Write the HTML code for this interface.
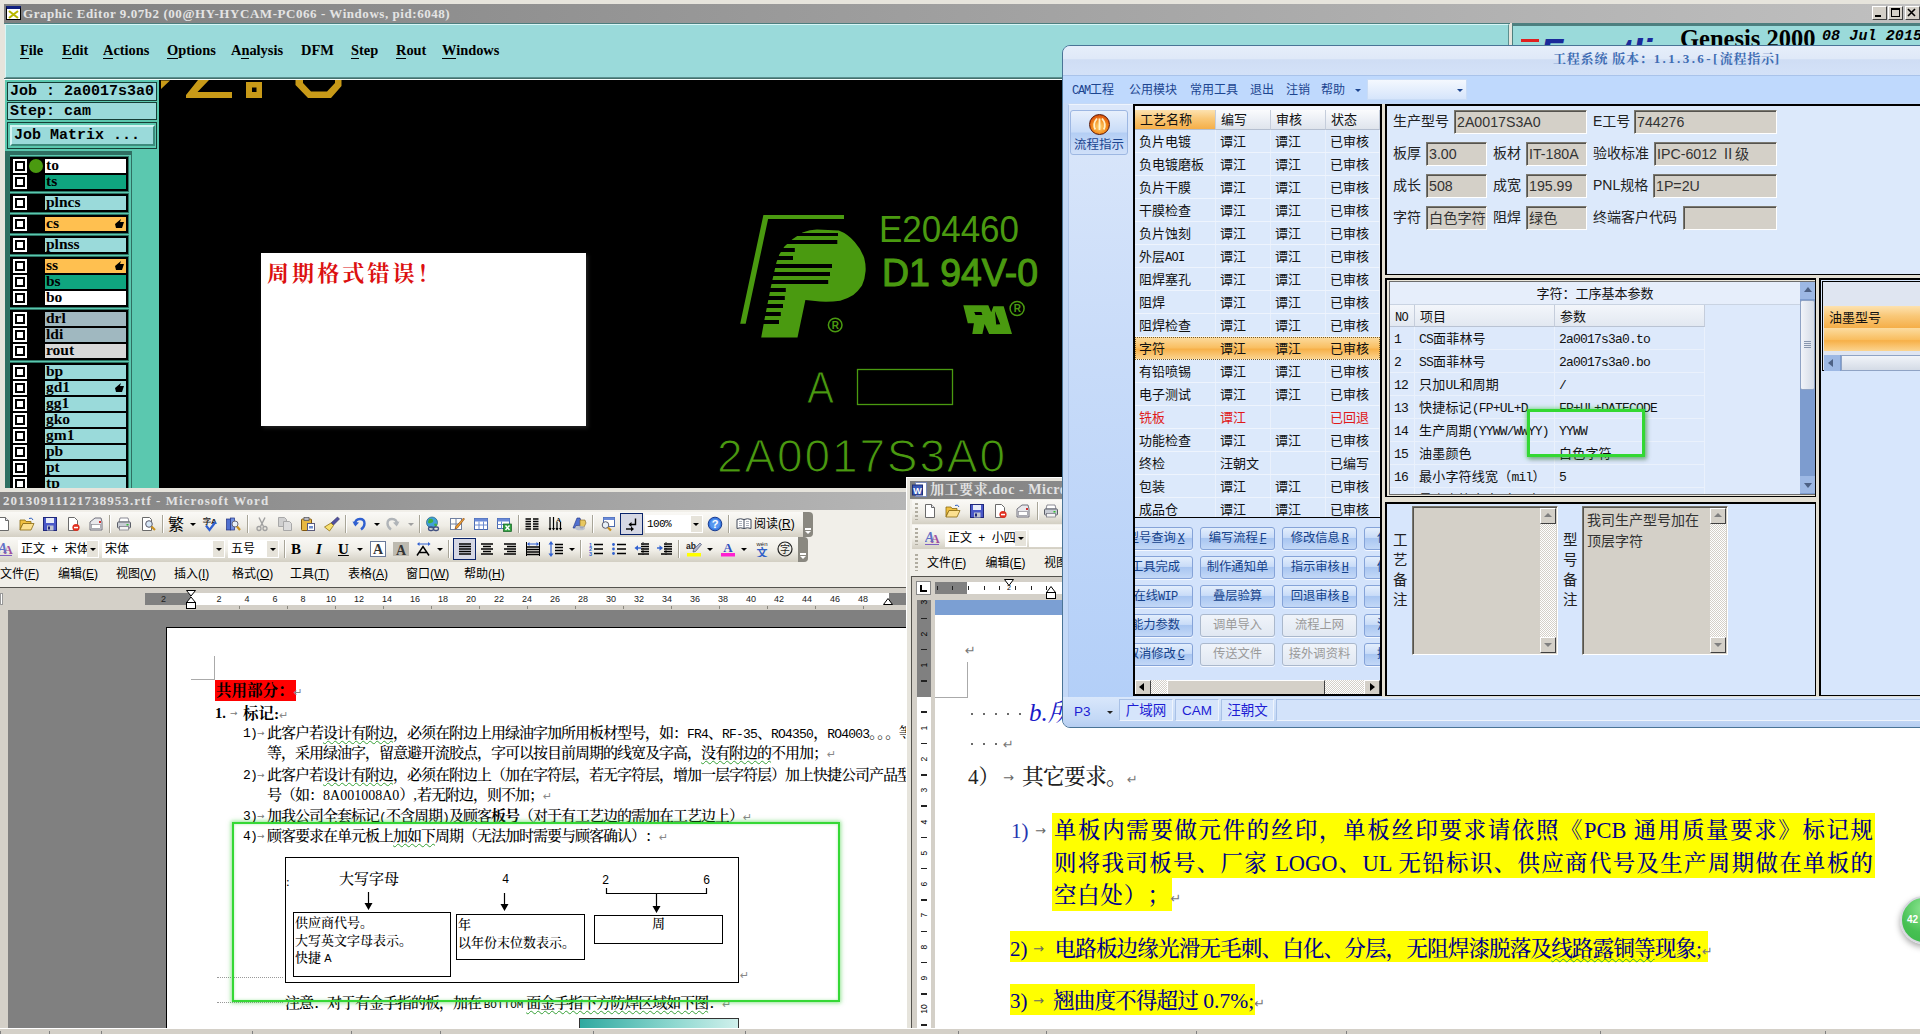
<!DOCTYPE html><html><head><meta charset="utf-8"><title>screen</title><style>
*{box-sizing:border-box;margin:0;padding:0}
html,body{width:1920px;height:1034px;overflow:hidden;background:#fff}
body{position:relative;text-spacing-trim:space-all;font-family:"Liberation Sans","Noto Sans CJK SC",sans-serif;font-size:12px;color:#000}
.a{position:absolute}
.mono{font-family:"Liberation Mono",monospace;font-weight:bold}
.serif{font-family:"Liberation Serif","Noto Serif CJK SC",serif}
.song{font-family:"Liberation Serif","Noto Serif CJK SC",serif;font-weight:500}
.hei{font-family:"Liberation Sans","Noto Sans CJK SC",sans-serif}
.nw{white-space:nowrap}
.wv{text-decoration:underline wavy #35a035 1px;text-underline-offset:2px;text-decoration-skip-ink:none}
/* genesis */
#gen{left:0;top:0;width:1920px;height:492px;background:#e6e4dc;overflow:hidden}
.gtitle{left:4px;top:4px;width:1916px;height:19px;background:linear-gradient(90deg,#808080,#c0c0c0);color:#e4e4e4;font:bold 13px/19px "Liberation Serif","Noto Serif CJK SC",serif;letter-spacing:.55px;white-space:nowrap}
.gmenu{background:#9adada;border:1px solid #5b8f8f;border-top-color:#d8f6f6;border-left-color:#d8f6f6}
.gmenu span{position:absolute;top:16px;font:bold 14.4px/18px "Liberation Serif",serif;white-space:nowrap}
.gmenu span u{text-decoration:none;border-bottom:1.5px solid #000;padding-bottom:0px}
.lp{background:#5bc8af}
.jbox{left:7px;width:150px;background:#9adada;border:1px solid #163e36;font:bold 15px/17px "Liberation Mono",monospace;white-space:nowrap;padding-left:2px;overflow:hidden}
.grp{left:10px;width:118px;background:#000;border:1px solid #000;outline:1px solid #2c7565}
.cb{left:2px;width:14px;height:14px;background:#fff;border:0}
.cb i{position:absolute;left:2px;top:2px;width:10px;height:10px;border:2px solid #000;background:#fff}
.lb{left:34px;width:81px;height:14px;font:bold 15.5px/12px "Liberation Serif",serif;padding-left:1px;white-space:nowrap;overflow:hidden}
</style></head><body>
<div id="gen" class="a">
<div class="a gtitle"><span class="a" style="left:2px;top:2px;width:15px;height:14px;background:#fff;border:1px solid #000;border-top:3px solid #102080"></span><svg class="a" style="left:4px;top:6px" width="11" height="9" viewBox="0 0 11 9"><path d="M1 1L10 8M10 1L1 8" stroke="#b8b800" stroke-width="2.2" fill="none"/></svg><span class="a" style="left:19px;top:0">Graphic Editor 9.07b2 (00@HY-HYCAM-PC066 - Windows, pid:6048)</span>
<span class="a" style="left:1868px;top:2px;width:15px;height:14px;background:#d4d0c8;border:1px solid #fff;border-right-color:#404040;border-bottom-color:#404040"></span>
<span class="a" style="left:1884px;top:2px;width:15px;height:14px;background:#d4d0c8;border:1px solid #fff;border-right-color:#404040;border-bottom-color:#404040"></span>
<span class="a" style="left:1901px;top:2px;width:15px;height:14px;background:#d4d0c8;border:1px solid #fff;border-right-color:#404040;border-bottom-color:#404040"></span>
<svg class="a" style="left:1868px;top:2px" width="48" height="14" viewBox="0 0 48 14"><path d="M3 10h6" stroke="#000" stroke-width="2"/><rect x="19.5" y="2.5" width="8" height="8" fill="none" stroke="#000" stroke-width="1"/><path d="M19 3h9" stroke="#000" stroke-width="2"/><path d="M36 3l7 7M43 3l-7 7" stroke="#000" stroke-width="1.6"/></svg>
</div>
<div class="a" style="left:4px;top:23px;width:1506px;height:1px;background:#4d7f7f"></div><div class="a gmenu" style="left:5px;top:24px;width:1504px;height:54px">
<span style="left:14px"><u>F</u>ile</span>
<span style="left:56px"><u>E</u>dit</span>
<span style="left:97px"><u>A</u>ctions</span>
<span style="left:161px"><u>O</u>ptions</span>
<span style="left:225px">A<u>n</u>alysis</span>
<span style="left:295px">DFM</span>
<span style="left:345px"><u>S</u>tep</span>
<span style="left:390px"><u>R</u>out</span>
<span style="left:436px"><u>W</u>indows</span>
</div>
<div class="a gmenu" style="left:1512px;top:23px;width:412px;height:55px;overflow:hidden;border-top:3px solid #4d7f7f;border-left:1px solid #4d7f7f"><span style="left:167px;top:-1px;font:bold 24.500px/28px 'Liberation Serif',serif">Genesis 2000</span><span style="left:309px;top:2px;font:italic bold 15px/18px 'Liberation Mono',monospace;letter-spacing:0.1px">08 Jul 2015</span><span style="left:8px;top:13px;width:18px;height:3px;background:#e02020"></span><span style="left:27px;top:8px;font:italic bold 38px/38px 'Liberation Sans',sans-serif;color:#1a2a9a;letter-spacing:-1px">Frontline</span></div>
<div class="a" style="left:4px;top:78px;width:1916px;height:1px;background:#44706c"></div>
<div class="a" style="left:4px;top:79px;width:1916px;height:1px;background:#f4fcfc"></div>
<div class="a" style="left:159px;top:80px;width:1761px;height:408px;background:#000"></div>
<div class="a lp" style="left:5px;top:80px;width:154px;height:408px"></div>
<div class="a jbox" style="top:82px;height:19px">Job : 2a0017s3a0</div>
<div class="a jbox" style="top:102px;height:18px">Step: cam</div>
<div class="a" style="left:7px;top:122px;width:150px;height:27px;border:1px solid #163e36;background:#5bc8af"></div>
<div class="a mono nw" style="left:10px;top:125px;width:145px;height:21px;background:#9adada;border:2px solid;border-color:#d4f4f4 #3d8a7c #3d8a7c #d4f4f4;font-size:15px;line-height:17px;padding-left:2px">Job Matrix ...</div>
<div class="a" style="left:5px;top:151px;width:127px;height:337px;background:#2f6f62"></div>
<div class="a" style="left:10px;top:155px;width:121px;height:333px;background:#5bc8af"></div>
<div class="a grp" style="top:157px;height:34px">
<span class="a cb" style="top:1px"><i></i></span>
<span class="a" style="left:18px;top:1px;width:14px;height:14px;border-radius:50%;background:#4a9a10"></span>
<span class="a lb" style="top:1px;background:#fff">to</span>
<span class="a cb" style="top:17px"><i></i></span>
<span class="a lb" style="top:17px;background:#0fa57f">ts</span>
</div>
<div class="a grp" style="top:194px;height:18px">
<span class="a cb" style="top:1px"><i></i></span>
<span class="a lb" style="top:1px;background:#9adada">plncs</span>
</div>
<div class="a grp" style="top:215px;height:18px">
<span class="a cb" style="top:1px"><i></i></span>
<span class="a lb" style="top:1px;background:#ffc050">cs<svg class="a" style="right:2px;top:2px" width="9" height="10" viewBox="0 0 9 10"><path d="M0 5L6 0L5 3L9 3L7 9L1 9Z" fill="#000"/></svg></span>
</div>
<div class="a grp" style="top:236px;height:18px">
<span class="a cb" style="top:1px"><i></i></span>
<span class="a lb" style="top:1px;background:#9adada">plnss</span>
</div>
<div class="a grp" style="top:257px;height:50px">
<span class="a cb" style="top:1px"><i></i></span>
<span class="a lb" style="top:1px;background:#ffc050">ss<svg class="a" style="right:2px;top:2px" width="9" height="10" viewBox="0 0 9 10"><path d="M0 5L6 0L5 3L9 3L7 9L1 9Z" fill="#000"/></svg></span>
<span class="a cb" style="top:17px"><i></i></span>
<span class="a lb" style="top:17px;background:#0fa57f">bs</span>
<span class="a cb" style="top:33px"><i></i></span>
<span class="a lb" style="top:33px;background:#fff">bo</span>
</div>
<div class="a grp" style="top:310px;height:50px">
<span class="a cb" style="top:1px"><i></i></span>
<span class="a lb" style="top:1px;background:#a0b8c0">drl</span>
<span class="a cb" style="top:17px"><i></i></span>
<span class="a lb" style="top:17px;background:#a0b8c0">ldi</span>
<span class="a cb" style="top:33px"><i></i></span>
<span class="a lb" style="top:33px;background:#d8d8d8">rout</span>
</div>
<div class="a grp" style="top:363px;height:130px">
<span class="a cb" style="top:1px"><i></i></span>
<span class="a lb" style="top:1px;background:#9adada">bp</span>
<span class="a cb" style="top:17px"><i></i></span>
<span class="a lb" style="top:17px;background:#9adada">gd1<svg class="a" style="right:2px;top:2px" width="9" height="10" viewBox="0 0 9 10"><path d="M0 5L6 0L5 3L9 3L7 9L1 9Z" fill="#000"/></svg></span>
<span class="a cb" style="top:33px"><i></i></span>
<span class="a lb" style="top:33px;background:#9adada">gg1</span>
<span class="a cb" style="top:49px"><i></i></span>
<span class="a lb" style="top:49px;background:#9adada">gko</span>
<span class="a cb" style="top:65px"><i></i></span>
<span class="a lb" style="top:65px;background:#9adada">gm1</span>
<span class="a cb" style="top:81px"><i></i></span>
<span class="a lb" style="top:81px;background:#9adada">pb</span>
<span class="a cb" style="top:97px"><i></i></span>
<span class="a lb" style="top:97px;background:#9adada">pt</span>
<span class="a cb" style="top:113px"><i></i></span>
<span class="a lb" style="top:113px;background:#9adada">tp</span>
</div>
</div>
<svg class="a" style="left:159px;top:80px" width="903" height="408" viewBox="159 80 903 408"><g fill="#c89a18"><path d="M161 80.5H170L161 89Z"/><path d="M198 80H209L197.500 92H232V98H186V95Z"/><path d="M246 82H262V98H246Z M252 87.500V92H256.500V87.500Z" fill-rule="evenodd"/><path d="M295.500 80H303V83L311 91.500H327L335 83V80H341.500V86L331 98H308L295.500 85Z"/></g><g fill="#4a9a10"><path d="M763.400 214.900H844V219H768.100L745.700 323.700H740.200Z"/><path d="M802.500 232.600 Q810 229.400 817 229.400 L838.800 230.500 Q848 234 854.700 242 Q861 249 864.200 258 Q866 265 865.600 271 Q865 279 862 285.600 Q858.500 291 853.300 295 Q847 299 840.200 300.800 Q830 302 820 301.500 L805.400 300 L797.500 337.500 H761.200 L764.800 317.800 L771 286.300 L776.400 262.400 L779.300 254.400 L784.400 246.400 L792.400 239.200Z"/></g><rect x="766.5" y="233" width="71.5" height="3" fill="#000"/><rect x="764.8" y="240" width="72.5" height="4" fill="#000"/><rect x="763.1" y="248" width="31.7" height="4" fill="#000"/><rect x="761.4" y="256" width="31.6" height="4" fill="#000"/><rect x="759.7" y="264" width="72.3" height="4" fill="#000"/><rect x="758.0" y="272" width="72.0" height="4" fill="#000"/><rect x="756.3" y="280" width="71.9" height="4" fill="#000"/><rect x="754.6" y="288" width="31.2" height="4" fill="#000"/><rect x="752.9" y="296" width="31.9" height="4" fill="#000"/><rect x="751.2" y="304" width="31.8" height="4" fill="#000"/><rect x="749.4" y="312" width="31.4" height="4" fill="#000"/><rect x="747.7" y="320" width="31.3" height="4" fill="#000"/><circle cx="835.200" cy="325" r="6.800" fill="none" stroke="#4a9a10" stroke-width="1.500"/><text x="835.400" y="328.600" font-family="Liberation Sans,sans-serif" font-size="10" font-weight="bold" fill="#4a9a10" text-anchor="middle">R</text><text x="879" y="242" font-family="Liberation Sans,sans-serif" font-size="36" fill="#4a9a10" textLength="140" lengthAdjust="spacingAndGlyphs">E204460</text><text x="882" y="286" font-family="Liberation Sans,sans-serif" font-size="38" stroke="#4a9a10" stroke-width="1.100" fill="#4a9a10" textLength="156" lengthAdjust="spacingAndGlyphs" xml:space="preserve">D1 94V-0</text><path fill="#4a9a10" fill-rule="evenodd" d="M963.300 305.200L988.300 305.200L991.200 312.300L993.400 306.200L1003.700 306.200L1012 333.900L989.100 333.900L984.600 324L982.400 333.900L972.300 333.900L973.900 323.200L967.800 323.200Z M974.200 312.100L981.400 312.100L982.400 315L975.500 315Z M994.900 311L1000.300 324.300L996.200 324.600Z"/><circle cx="1017.100" cy="308.500" r="7" fill="none" stroke="#4a9a10" stroke-width="1.500"/><text x="1017.300" y="312.200" font-family="Liberation Sans,sans-serif" font-size="10" font-weight="bold" fill="#4a9a10" text-anchor="middle">R</text><text x="807" y="403" font-family="Liberation Sans,sans-serif" font-size="45" fill="#4a9a10" stroke="#000" stroke-width="1.100" textLength="27" lengthAdjust="spacingAndGlyphs">A</text><rect x="857.500" y="369.500" width="95" height="35" fill="none" stroke="#4a9a10" stroke-width="1.300"/><text x="717" y="472" font-family="Liberation Sans,sans-serif" font-size="46" fill="#4a9a10" stroke="#000" stroke-width="1.200" textLength="288" lengthAdjust="spacing">2A0017S3A0</text></svg>
<div class="a" style="left:261px;top:253px;width:325px;height:173px;background:#fff;box-shadow:2px 2px 4px #222"></div>
<div class="a song nw" style="left:267px;top:261px;font-weight:bold;font-size:22px;line-height:26px;letter-spacing:3.1px;color:#dc1010">周期格式错误！</div>
<div class="a" id="w1" style="left:0;top:0;width:907px;height:1034px;overflow:hidden">
<div class="a" style="left:0;top:488px;width:907px;height:546px;background:#e6e4dc"></div>
<div class="a" style="left:0;top:492px;width:907px;height:18px;background:linear-gradient(90deg,#808080,#b6b6b6)"></div>
<div class="a nw" style="left:3px;top:492px;height:18px;color:#e2e2e2;font:bold 13px/18px 'Liberation Serif','Noto Serif CJK SC',serif;letter-spacing:1.050px" id="w1t">20130911121738953.rtf - Microsoft Word</div>
<div class="a" style="left:0;top:510px;width:907px;height:77px;background:#f1efe9"></div>
<div class="a" style="left:0;top:512px;width:813px;height:25px;background:linear-gradient(#faf9f6,#efede6 55%,#d3cfc3);border-radius:0 4px 4px 0"></div>
<div class="a" style="left:803px;top:512px;width:10px;height:25px;background:#8a8880;border-radius:0 4px 4px 0"></div>
<div class="a" style="left:0;top:537px;width:808px;height:25px;background:linear-gradient(#faf9f6,#efede6 55%,#d3cfc3);border-radius:0 4px 4px 0"></div>
<div class="a" style="left:798px;top:537px;width:10px;height:25px;background:#8a8880;border-radius:0 4px 4px 0"></div>
<span class="a" style="left:805px;top:528px;width:6px;height:1.500px;background:#fff"></span><span class="a" style="left:805px;top:531px;width:0;height:0;border:3px solid transparent;border-top:3px solid #fff;border-bottom:0"></span>
<span class="a" style="left:800px;top:553px;width:6px;height:1.500px;background:#fff"></span><span class="a" style="left:800px;top:556px;width:0;height:0;border:3px solid transparent;border-top:3px solid #fff;border-bottom:0"></span>
<svg class="a" style="left:-4px;top:516px" width="16" height="16" viewBox="0 0 16 16"><path d="M3.500 1.500h6l3 3v10h-9z" fill="#fff" stroke="#6a6a6a"/><path d="M9.500 1.500v3h3" fill="#e8e8f0" stroke="#6a6a6a"/></svg>
<svg class="a" style="left:19px;top:516px" width="16" height="16" viewBox="0 0 16 16"><path d="M1 4h5l1 1.500h5v2H4l-3 6z" fill="#f0c040" stroke="#8a6a10" stroke-width=".8"/><path d="M4 7.500h11l-3 6.500H1z" fill="#fbe090" stroke="#8a6a10" stroke-width=".8"/><path d="M10 2.500q3-1.500 4 1.500" fill="none" stroke="#3060c0"/></svg>
<svg class="a" style="left:42px;top:516px" width="16" height="16" viewBox="0 0 16 16"><rect x="1.500" y="1.500" width="13" height="13" fill="#4a58c8" stroke="#20287a"/><rect x="4" y="2" width="8" height="5" fill="#e8ecf8"/><rect x="5" y="9.500" width="6.500" height="5" fill="#c0c4d0"/><rect x="6" y="10.500" width="2" height="3" fill="#20287a"/></svg>
<svg class="a" style="left:65px;top:516px" width="16" height="16" viewBox="0 0 16 16"><path d="M3.500 1.500h6l3 3v10h-9z" fill="#fff" stroke="#6a6a6a"/><circle cx="11" cy="11.500" r="3.600" fill="#e03020"/><rect x="9" y="10.800" width="4" height="1.500" fill="#fff"/></svg>
<svg class="a" style="left:88px;top:516px" width="16" height="16" viewBox="0 0 16 16"><path d="M2 6l5-4h6l1 4v8H2z" fill="#e8e8ec" stroke="#70707c"/><rect x="3.500" y="8.500" width="9" height="4" fill="#fff" stroke="#8a8a94" stroke-width=".7"/><rect x="11" y="5" width="2" height="2" fill="#d03030"/></svg>
<span class="a" style="left:109px;top:515px;width:2px;height:18px;border-left:1px solid #a8a598;border-right:1px solid #fff"></span>
<svg class="a" style="left:116px;top:516px" width="16" height="16" viewBox="0 0 16 16"><path d="M4 2h8l1 4H3z" fill="#fff" stroke="#70707c" stroke-width=".8"/><rect x="1.500" y="6" width="13" height="6" rx="1" fill="#c8ccd4" stroke="#5a5e68"/><rect x="3.500" y="10.500" width="9" height="3.500" fill="#f4f4f4" stroke="#70707c" stroke-width=".7"/><rect x="10.500" y="8" width="2" height="1.500" fill="#30c030"/></svg>
<svg class="a" style="left:140px;top:516px" width="16" height="16" viewBox="0 0 16 16"><path d="M2.500 1.500h7l2 2v11h-9z" fill="#fff" stroke="#6a6a6a"/><circle cx="9" cy="8" r="3.300" fill="#d8e8f8" stroke="#5a5a6a"/><path d="M11.500 10.500l3.500 3.500" stroke="#c89020" stroke-width="2.200"/></svg>
<span class="a" style="left:162px;top:515px;width:2px;height:18px;border-left:1px solid #a8a598;border-right:1px solid #fff"></span>
<span class="a hei nw" style="left:168px;top:515px;font-size:16px;line-height:20px">繁</span><span class="a" style="left:190px;top:523px;width:0;height:0;border:3px solid transparent;border-top:3px solid #000;border-bottom:0"></span>
<svg class="a" style="left:202px;top:516px" width="16" height="16" viewBox="0 0 16 16"><text x="1" y="8" font-size="8" font-weight="bold" font-family="Liberation Sans,sans-serif" fill="#222">字A</text><path d="M4 9.500l3.500 4.500l6-8" fill="none" stroke="#3060d0" stroke-width="2.200"/></svg>
<svg class="a" style="left:225px;top:516px" width="16" height="16" viewBox="0 0 16 16"><rect x="1.500" y="3" width="4" height="11" fill="#5070d0" stroke="#203080" stroke-width=".7"/><rect x="5.500" y="2" width="4" height="12" fill="#7090e0" stroke="#203080" stroke-width=".7"/><circle cx="10" cy="8" r="3" fill="#e8f0f8" stroke="#6a6a7a"/><path d="M12 10.500l3 3.500" stroke="#c89020" stroke-width="2.200"/></svg>
<span class="a" style="left:247px;top:515px;width:2px;height:18px;border-left:1px solid #a8a598;border-right:1px solid #fff"></span>
<svg class="a" style="left:254px;top:516px" width="16" height="16" viewBox="0 0 16 16"><path d="M5 1.500l4.500 9M11 1.500l-4.500 9" stroke="#a0a0a0" stroke-width="1.400" fill="none"/><circle cx="5" cy="12.500" r="2" fill="none" stroke="#a0a0a0" stroke-width="1.300"/><circle cx="11" cy="12.500" r="2" fill="none" stroke="#a0a0a0" stroke-width="1.300"/></svg>
<svg class="a" style="left:277px;top:516px" width="16" height="16" viewBox="0 0 16 16"><path d="M1.500 1.500h6l2 2v7h-8z" fill="#d0d0d0" stroke="#a8a8a8"/><path d="M6.500 5.500h6l2 2v7h-8z" fill="#dcdcdc" stroke="#a8a8a8"/></svg>
<svg class="a" style="left:300px;top:516px" width="16" height="16" viewBox="0 0 16 16"><rect x="1.500" y="3" width="10" height="11.500" rx="1" fill="#e8b840" stroke="#805810"/><rect x="4" y="1.500" width="5" height="3" fill="#b8b8c0" stroke="#505058" stroke-width=".7"/><rect x="7.500" y="7.500" width="7" height="7" fill="#fff" stroke="#5a5a7a"/><rect x="9" y="10" width="4" height="2.500" fill="#7090d0"/></svg>
<svg class="a" style="left:324px;top:516px" width="16" height="16" viewBox="0 0 16 16"><path d="M13.500 1l2 2l-6 6l-2.500-2z" fill="#5050a0" stroke="#303060" stroke-width=".6"/><path d="M7 7l2.500 2.500l-4 5.500l-5-4z" fill="#f8e070" stroke="#907010" stroke-width=".8"/></svg>
<span class="a" style="left:345px;top:515px;width:2px;height:18px;border-left:1px solid #a8a598;border-right:1px solid #fff"></span>
<svg class="a" style="left:352px;top:516px" width="16" height="16" viewBox="0 0 16 16"><path d="M3 8.500q0-5.500 5-5.500q4.500 0 4.500 4.500q0 3.500-3.500 6" fill="none" stroke="#3060d0" stroke-width="2.400"/><path d="M0.500 5.500l2.800 5l3.700-4z" fill="#3060d0"/></svg>
<span class="a" style="left:374px;top:523px;width:0;height:0;border:3px solid transparent;border-top:3px solid #000;border-bottom:0"></span>
<svg class="a" style="left:384px;top:516px" width="16" height="16" viewBox="0 0 16 16"><path d="M13 8.500q0-5.500-5-5.500q-4.500 0-4.500 4.500q0 3.500 3.500 6" fill="none" stroke="#b0b4b8" stroke-width="2.400"/><path d="M15.500 5.500l-2.800 5l-3.700-4z" fill="#b0b4b8"/></svg>
<span class="a" style="left:408px;top:523px;width:0;height:0;border:3px solid transparent;border-top:3px solid #a0a0a0;border-bottom:0"></span>
<span class="a" style="left:419px;top:515px;width:2px;height:18px;border-left:1px solid #a8a598;border-right:1px solid #fff"></span>
<svg class="a" style="left:425px;top:516px" width="16" height="16" viewBox="0 0 16 16"><circle cx="7" cy="6.500" r="5.500" fill="#40a0d8" stroke="#206080" stroke-width=".7"/><path d="M4 3q3-1 4 1t-2 3t-3-1zM9 8q2-1 3 .500t-2 2z" fill="#40b040"/><rect x="3.500" y="11" width="5" height="3.500" rx="1.700" fill="none" stroke="#405080" stroke-width="1.400"/><rect x="8.500" y="11" width="5" height="3.500" rx="1.700" fill="none" stroke="#405080" stroke-width="1.400"/></svg>
<svg class="a" style="left:449px;top:516px" width="16" height="16" viewBox="0 0 16 16"><rect x="1.500" y="2.500" width="11" height="11" fill="#fff" stroke="#7080a0"/><path d="M1.500 8h11M7 2.500v11" stroke="#7080a0"/><path d="M14.500 2l1 1l-7 9l-2.500 1l.8-2.500z" fill="#f0a030" stroke="#804010" stroke-width=".6"/></svg>
<svg class="a" style="left:473px;top:516px" width="16" height="16" viewBox="0 0 16 16"><rect x="1.500" y="2.500" width="13" height="11" fill="#fff" stroke="#4a6ab0"/><rect x="1.500" y="2.500" width="13" height="3" fill="#6a8ad8"/><path d="M1.500 9h13M6 5.500v8M10.500 5.500v8" stroke="#6a8ad0"/></svg>
<svg class="a" style="left:496px;top:516px" width="16" height="16" viewBox="0 0 16 16"><rect x="1.500" y="2.500" width="12" height="10" fill="#fff" stroke="#4a6ab0"/><rect x="1.500" y="2.500" width="12" height="3" fill="#6a8ad8"/><path d="M1.500 8.500h12M5.500 5.500v7" stroke="#6a8ad0"/><rect x="7.500" y="8" width="8" height="7.500" fill="#30a040" stroke="#106020" stroke-width=".7"/><path d="M9.500 9.500l4 4.500M13.500 9.500l-4 4.500" stroke="#fff" stroke-width="1.400"/></svg>
<span class="a" style="left:518px;top:515px;width:2px;height:18px;border-left:1px solid #a8a598;border-right:1px solid #fff"></span>
<svg class="a" style="left:524px;top:516px" width="16" height="16" viewBox="0 0 16 16"><path d="M1.500 3h5.500M1.500 5.500h5.500M1.500 8h5.500M1.500 10.500h5.500M1.500 13h5.500M9 3h5.500M9 5.500h5.500M9 8h5.500M9 10.500h5.500M9 13h5.500" stroke="#000" stroke-width="1.300"/></svg>
<svg class="a" style="left:548px;top:516px" width="16" height="16" viewBox="0 0 16 16"><path d="M2 1v13M5.500 1v13M9 6v8M12.500 6v8" stroke="#000" stroke-width="1.200"/><path d="M.500 12l1.500 2.500l1.500-2.500zM4 12l1.500 2.500l1.500-2.500zM7.500 12l1.500 2.500l1.500-2.500zM11 12l1.500 2.500l1.500-2.500z" fill="#000"/><text x="8" y="5.500" font-size="7" font-weight="bold" font-family="Liberation Serif,serif">A</text></svg>
<svg class="a" style="left:571px;top:516px" width="16" height="16" viewBox="0 0 16 16"><path d="M2 12l4-10h3l3 10h-2.500l-.7-2.500H5l-.8 2.500z" fill="#5070d0" stroke="#203080" stroke-width=".6"/><path d="M9 4h5l1 3l-2 4h-4z" fill="#e8c860" stroke="#806020" stroke-width=".6"/><ellipse cx="9" cy="12" rx="5" ry="2.300" fill="#b0b8c8" opacity=".8"/></svg>
<span class="a" style="left:592px;top:515px;width:2px;height:18px;border-left:1px solid #a8a598;border-right:1px solid #fff"></span>
<svg class="a" style="left:600px;top:516px" width="16" height="16" viewBox="0 0 16 16"><rect x="3.500" y="1.500" width="11" height="9" fill="#fff" stroke="#4a6ab0"/><rect x="3.500" y="1.500" width="11" height="2.500" fill="#6a8ad8"/><circle cx="5.500" cy="9" r="3.300" fill="#e8f0f8" stroke="#5a5a6a"/><path d="M8 11.500l3 3" stroke="#c89020" stroke-width="2.200"/></svg>
<span class="a" style="left:620px;top:513px;width:23px;height:22px;border:1px solid #0a246a;background:#d6d8e4"></span><svg class="a" style="left:624px;top:516px" width="16" height="16" viewBox="0 0 16 16"><path d="M11.500 2.500v6h-6" fill="none" stroke="#000" stroke-width="1.400"/><path d="M7.500 6l-3 2.500l3 2.500z" fill="#000"/><path d="M2 13h6" stroke="#000" stroke-width="1.400"/><path d="M7 10.500l3 2.500l-3 2.500z" fill="#000"/></svg>
<span class="a" style="left:645px;top:515px;width:58px;height:18px;background:#fff"></span><span class="a nw" style="left:647px;top:515px;font:11px/18px 'Liberation Mono',monospace;letter-spacing:-.6px">100%</span><span class="a" style="left:691px;top:516px;width:11px;height:16px;background:#e6e3da"></span><span class="a" style="left:693px;top:523px;width:0;height:0;border:3px solid transparent;border-top:3px solid #000;border-bottom:0"></span>
<svg class="a" style="left:707px;top:516px" width="16" height="16" viewBox="0 0 16 16"><circle cx="8" cy="8" r="6.800" fill="#3878e0" stroke="#1a3c90"/><circle cx="8" cy="8" r="5" fill="#5898f0"/><text x="8" y="12" font-size="11" font-weight="bold" font-family="Liberation Sans,sans-serif" fill="#fff" text-anchor="middle">?</text></svg>
<span class="a" style="left:728px;top:515px;width:2px;height:18px;border-left:1px solid #a8a598;border-right:1px solid #fff"></span>
<svg class="a" style="left:736px;top:516px" width="16" height="16" viewBox="0 0 16 16"><path d="M1 3.500q3.500-1.500 7 0q3.500-1.500 7 0v9q-3.500-1.500-7 0q-3.500-1.500-7 0z" fill="#fff" stroke="#404858"/><path d="M8 3.500v9" stroke="#404858"/><path d="M3 5.500h3M3 7.500h3M3 9.500h3M10 5.500h3M10 7.500h3M10 9.500h3" stroke="#8890a0" stroke-width=".7"/></svg>
<span class="a hei nw" style="left:754px;top:515px;font-size:12px;line-height:18px">阅读(<u>R</u>)</span>
<svg class="a" style="left:-2px;top:541px" width="16" height="16" viewBox="0 0 16 16"><text x="0" y="12" font-size="14" font-weight="bold" font-style="italic" font-family="Liberation Serif,serif" fill="#6070c8">A</text><text x="6" y="13" font-size="12" font-weight="bold" font-family="Liberation Serif,serif" fill="#a050a0">A</text><path d="M0 14.500h14" stroke="#8060c0"/></svg>
<span class="a" style="left:18px;top:540px;width:81px;height:18px;background:#fff"></span><span class="a hei nw" style="left:21px;top:540px;font-size:12px;line-height:18px;word-spacing:3px">正文 + 宋体</span><span class="a" style="left:87px;top:541px;width:11px;height:16px;background:#e6e3da"></span><span class="a" style="left:90px;top:548px;width:0;height:0;border:3px solid transparent;border-top:3px solid #000;border-bottom:0"></span>
<span class="a" style="left:102px;top:540px;width:123px;height:18px;background:#fff"></span><span class="a hei nw" style="left:105px;top:540px;font-size:12px;line-height:18px;word-spacing:3px">宋体</span><span class="a" style="left:213px;top:541px;width:11px;height:16px;background:#e6e3da"></span><span class="a" style="left:216px;top:548px;width:0;height:0;border:3px solid transparent;border-top:3px solid #000;border-bottom:0"></span>
<span class="a" style="left:228px;top:540px;width:51px;height:18px;background:#fff"></span><span class="a hei nw" style="left:231px;top:540px;font-size:12px;line-height:18px;word-spacing:3px">五号</span><span class="a" style="left:267px;top:541px;width:11px;height:16px;background:#e6e3da"></span><span class="a" style="left:270px;top:548px;width:0;height:0;border:3px solid transparent;border-top:3px solid #000;border-bottom:0"></span>
<span class="a" style="left:284px;top:540px;width:2px;height:18px;border-left:1px solid #a8a598;border-right:1px solid #fff"></span>
<span class="a serif" style="left:291px;top:539px;font:bold 15px/20px 'Liberation Serif',serif">B</span>
<span class="a serif" style="left:316px;top:539px;font:italic bold 15px/20px 'Liberation Serif',serif">I</span>
<span class="a serif" style="left:338px;top:539px;font:bold 15px/20px 'Liberation Serif',serif;text-decoration:underline">U</span><span class="a" style="left:357px;top:548px;width:0;height:0;border:3px solid transparent;border-top:3px solid #000;border-bottom:0"></span>
<svg class="a" style="left:370px;top:541px" width="16" height="16" viewBox="0 0 16 16"><rect x=".500" y=".500" width="15" height="15" fill="#fff" stroke="#6a7a9a"/><text x="8" y="13" font-size="14" font-weight="bold" font-family="Liberation Serif,serif" fill="#333" text-anchor="middle">A</text></svg>
<svg class="a" style="left:393px;top:541px" width="16" height="16" viewBox="0 0 16 16"><rect x="0" y="1" width="16" height="14" fill="#bdbab0"/><text x="8" y="13.500" font-size="14" font-weight="bold" font-family="Liberation Serif,serif" fill="#333" text-anchor="middle">A</text></svg>
<svg class="a" style="left:416px;top:541px" width="16" height="16" viewBox="0 0 16 16"><path d="M1 14.500l6-9l6 9M3.500 11.500h7.500" fill="none" stroke="#000" stroke-width="1.500"/><path d="M2 3h11" stroke="#3060d0"/><path d="M1 3l2.500-2v4zM14.500 3l-2.500-2v4z" fill="#3060d0"/></svg>
<span class="a" style="left:437px;top:548px;width:0;height:0;border:3px solid transparent;border-top:3px solid #000;border-bottom:0"></span>
<span class="a" style="left:448px;top:540px;width:2px;height:18px;border-left:1px solid #a8a598;border-right:1px solid #fff"></span>
<span class="a" style="left:453px;top:538px;width:23px;height:22px;border:1px solid #0a246a;background:#d6d8e4"></span>
<svg class="a" style="left:457px;top:541px" width="16" height="16" viewBox="0 0 16 16"><path d="M2 3h12M2 5.500h12M2 8h12M2 10.500h12M2 13h12" stroke="#000" stroke-width="1.300"/></svg>
<svg class="a" style="left:479px;top:541px" width="16" height="16" viewBox="0 0 16 16"><path d="M2 3h12M4 5.500h8M2 8h12M4 10.500h8M2 13h12" stroke="#000" stroke-width="1.300"/></svg>
<svg class="a" style="left:502px;top:541px" width="16" height="16" viewBox="0 0 16 16"><path d="M2 3h12M5 5.500h9M2 8h12M5 10.500h9M2 13h12" stroke="#000" stroke-width="1.300"/></svg>
<svg class="a" style="left:525px;top:541px" width="16" height="16" viewBox="0 0 16 16"><path d="M2 6h12M2 8.500h12M2 11h12M2 13.500h12" stroke="#000" stroke-width="1.300"/><path d="M1.500 1v14M14.500 1v14" stroke="#000"/><path d="M3 3h10" stroke="#3060d0"/><path d="M2 3l2.500-2v4zM14 3l-2.500-2v4z" fill="#3060d0"/></svg>
<svg class="a" style="left:548px;top:541px" width="16" height="16" viewBox="0 0 16 16"><path d="M7 3.500h8M7 6.500h8M7 9.500h8M7 12.500h8" stroke="#000" stroke-width="1.300"/><path d="M3 2v12" stroke="#3060d0" stroke-width="1.200"/><path d="M3 0l-2.500 3.500h5zM3 16l-2.500-3.500h5z" fill="#3060d0"/></svg>
<span class="a" style="left:569px;top:548px;width:0;height:0;border:3px solid transparent;border-top:3px solid #000;border-bottom:0"></span>
<span class="a" style="left:580px;top:540px;width:2px;height:18px;border-left:1px solid #a8a598;border-right:1px solid #fff"></span>
<svg class="a" style="left:588px;top:541px" width="16" height="16" viewBox="0 0 16 16"><path d="M6 3.500h9M6 8h9M6 12.500h9" stroke="#000" stroke-width="1.300"/><text x="1" y="5.500" font-size="5.500" font-weight="bold" font-family="Liberation Sans,sans-serif" fill="#3060d0">1</text><text x="1" y="10" font-size="5.500" font-weight="bold" font-family="Liberation Sans,sans-serif" fill="#3060d0">2</text><text x="1" y="14.500" font-size="5.500" font-weight="bold" font-family="Liberation Sans,sans-serif" fill="#3060d0">3</text></svg>
<svg class="a" style="left:611px;top:541px" width="16" height="16" viewBox="0 0 16 16"><path d="M6 3.500h9M6 8h9M6 12.500h9" stroke="#000" stroke-width="1.300"/><circle cx="2.500" cy="3.500" r="1.400" fill="#3060d0"/><circle cx="2.500" cy="8" r="1.400" fill="#3060d0"/><circle cx="2.500" cy="12.500" r="1.400" fill="#3060d0"/></svg>
<svg class="a" style="left:634px;top:541px" width="16" height="16" viewBox="0 0 16 16"><path d="M7 3h8M7 5.500h8M7 8h8M7 10.500h8M4 13h11" stroke="#000" stroke-width="1.300"/><path d="M0.500 7l3.500-2.800v5.600z" fill="#3060d0"/><path d="M4 7h3" stroke="#3060d0" stroke-width="1.400"/><path d="M9 1v14" stroke="#000" stroke-dasharray="1 1" stroke-width=".8"/></svg>
<svg class="a" style="left:657px;top:541px" width="16" height="16" viewBox="0 0 16 16"><path d="M7 3h8M7 5.500h8M7 8h8M7 10.500h8M4 13h11" stroke="#000" stroke-width="1.300"/><path d="M6 7l-3.500-2.800v5.600z" fill="#3060d0"/><path d="M0 7h3" stroke="#3060d0" stroke-width="1.400"/><path d="M9 1v14" stroke="#000" stroke-dasharray="1 1" stroke-width=".8"/></svg>
<span class="a" style="left:678px;top:540px;width:2px;height:18px;border-left:1px solid #a8a598;border-right:1px solid #fff"></span>
<svg class="a" style="left:686px;top:541px" width="16" height="16" viewBox="0 0 16 16"><text x="0" y="7.500" font-size="8.500" font-weight="bold" font-family="Liberation Sans,sans-serif" fill="#222">ab</text><path d="M14 2l1.500 1.500l-6 7l-2.500.500l.5-2.500z" fill="#b0b8d0" stroke="#404868" stroke-width=".6"/><rect x="1" y="12" width="14" height="3.500" fill="#ffff00"/></svg>
<span class="a" style="left:707px;top:548px;width:0;height:0;border:3px solid transparent;border-top:3px solid #000;border-bottom:0"></span>
<svg class="a" style="left:720px;top:541px" width="16" height="16" viewBox="0 0 16 16"><text x="8" y="10.500" font-size="13" font-weight="bold" font-family="Liberation Serif,serif" fill="#3050c0" text-anchor="middle">A</text><rect x="1" y="12" width="14" height="3.500" fill="#ff20d0"/></svg>
<span class="a" style="left:741px;top:548px;width:0;height:0;border:3px solid transparent;border-top:3px solid #000;border-bottom:0"></span>
<svg class="a" style="left:754px;top:541px" width="16" height="16" viewBox="0 0 16 16"><text x="8" y="5" font-size="6" font-family="Liberation Sans,sans-serif" fill="#222" text-anchor="middle">wén</text><text x="8" y="15.500" font-size="11" font-weight="bold" font-family="Noto Sans CJK SC,sans-serif" fill="#3060c8" text-anchor="middle">文</text></svg>
<svg class="a" style="left:777px;top:541px" width="16" height="16" viewBox="0 0 16 16"><circle cx="8" cy="8" r="7" fill="none" stroke="#222" stroke-width="1.200"/><text x="8" y="12" font-size="10" font-family="Noto Sans CJK SC,sans-serif" fill="#222" text-anchor="middle">字</text></svg>
<span class="a hei nw" style="left:0px;top:565px;font-size:12px;line-height:18px;color:#000">文件(<u>F</u>)</span>
<span class="a hei nw" style="left:58px;top:565px;font-size:12px;line-height:18px;color:#000">编辑(<u>E</u>)</span>
<span class="a hei nw" style="left:116px;top:565px;font-size:12px;line-height:18px;color:#000">视图(<u>V</u>)</span>
<span class="a hei nw" style="left:174px;top:565px;font-size:12px;line-height:18px;color:#000">插入(<u>I</u>)</span>
<span class="a hei nw" style="left:232px;top:565px;font-size:12px;line-height:18px;color:#000">格式(<u>O</u>)</span>
<span class="a hei nw" style="left:290px;top:565px;font-size:12px;line-height:18px;color:#000">工具(<u>T</u>)</span>
<span class="a hei nw" style="left:348px;top:565px;font-size:12px;line-height:18px;color:#000">表格(<u>A</u>)</span>
<span class="a hei nw" style="left:406px;top:565px;font-size:12px;line-height:18px;color:#000">窗口(<u>W</u>)</span>
<span class="a hei nw" style="left:464px;top:565px;font-size:12px;line-height:18px;color:#000">帮助(<u>H</u>)</span>
<div class="a" style="left:0;top:587px;width:907px;height:1px;background:#55534e"></div>
<div class="a" style="left:0;top:588px;width:907px;height:446px;background:#d4d0c8"></div>
<div class="a" style="left:0;top:593px;width:3px;height:12px;background:#fff;border:1px solid #999"></div>
<div class="a" style="left:145px;top:593px;width:46px;height:12px;background:#808080"></div>
<div class="a" style="left:191px;top:593px;width:698px;height:12px;background:#fff"></div>
<div class="a" style="left:889px;top:593px;width:18px;height:12px;background:#808080"></div>
<span class="a nw" style="left:153.5px;top:593px;width:20px;text-align:center;font:9px/12px 'Liberation Sans',sans-serif;color:#222">2</span>
<span class="a nw" style="left:209px;top:593px;width:20px;text-align:center;font:9px/12px 'Liberation Sans',sans-serif;color:#222">2</span>
<span class="a nw" style="left:237px;top:593px;width:20px;text-align:center;font:9px/12px 'Liberation Sans',sans-serif;color:#222">4</span>
<span class="a nw" style="left:265px;top:593px;width:20px;text-align:center;font:9px/12px 'Liberation Sans',sans-serif;color:#222">6</span>
<span class="a nw" style="left:293px;top:593px;width:20px;text-align:center;font:9px/12px 'Liberation Sans',sans-serif;color:#222">8</span>
<span class="a nw" style="left:321px;top:593px;width:20px;text-align:center;font:9px/12px 'Liberation Sans',sans-serif;color:#222">10</span>
<span class="a nw" style="left:349px;top:593px;width:20px;text-align:center;font:9px/12px 'Liberation Sans',sans-serif;color:#222">12</span>
<span class="a nw" style="left:377px;top:593px;width:20px;text-align:center;font:9px/12px 'Liberation Sans',sans-serif;color:#222">14</span>
<span class="a nw" style="left:405px;top:593px;width:20px;text-align:center;font:9px/12px 'Liberation Sans',sans-serif;color:#222">16</span>
<span class="a nw" style="left:433px;top:593px;width:20px;text-align:center;font:9px/12px 'Liberation Sans',sans-serif;color:#222">18</span>
<span class="a nw" style="left:461px;top:593px;width:20px;text-align:center;font:9px/12px 'Liberation Sans',sans-serif;color:#222">20</span>
<span class="a nw" style="left:489px;top:593px;width:20px;text-align:center;font:9px/12px 'Liberation Sans',sans-serif;color:#222">22</span>
<span class="a nw" style="left:517px;top:593px;width:20px;text-align:center;font:9px/12px 'Liberation Sans',sans-serif;color:#222">24</span>
<span class="a nw" style="left:545px;top:593px;width:20px;text-align:center;font:9px/12px 'Liberation Sans',sans-serif;color:#222">26</span>
<span class="a nw" style="left:573px;top:593px;width:20px;text-align:center;font:9px/12px 'Liberation Sans',sans-serif;color:#222">28</span>
<span class="a nw" style="left:601px;top:593px;width:20px;text-align:center;font:9px/12px 'Liberation Sans',sans-serif;color:#222">30</span>
<span class="a nw" style="left:629px;top:593px;width:20px;text-align:center;font:9px/12px 'Liberation Sans',sans-serif;color:#222">32</span>
<span class="a nw" style="left:657px;top:593px;width:20px;text-align:center;font:9px/12px 'Liberation Sans',sans-serif;color:#222">34</span>
<span class="a nw" style="left:685px;top:593px;width:20px;text-align:center;font:9px/12px 'Liberation Sans',sans-serif;color:#222">36</span>
<span class="a nw" style="left:713px;top:593px;width:20px;text-align:center;font:9px/12px 'Liberation Sans',sans-serif;color:#222">38</span>
<span class="a nw" style="left:741px;top:593px;width:20px;text-align:center;font:9px/12px 'Liberation Sans',sans-serif;color:#222">40</span>
<span class="a nw" style="left:769px;top:593px;width:20px;text-align:center;font:9px/12px 'Liberation Sans',sans-serif;color:#222">42</span>
<span class="a nw" style="left:797px;top:593px;width:20px;text-align:center;font:9px/12px 'Liberation Sans',sans-serif;color:#222">44</span>
<span class="a nw" style="left:825px;top:593px;width:20px;text-align:center;font:9px/12px 'Liberation Sans',sans-serif;color:#222">46</span>
<span class="a nw" style="left:853px;top:593px;width:20px;text-align:center;font:9px/12px 'Liberation Sans',sans-serif;color:#222">48</span>
<span class="a" style="left:239px;top:606px;width:1px;height:3px;background:#8a887f"></span>
<span class="a" style="left:287px;top:606px;width:1px;height:3px;background:#8a887f"></span>
<span class="a" style="left:335px;top:606px;width:1px;height:3px;background:#8a887f"></span>
<span class="a" style="left:383px;top:606px;width:1px;height:3px;background:#8a887f"></span>
<span class="a" style="left:431px;top:606px;width:1px;height:3px;background:#8a887f"></span>
<span class="a" style="left:479px;top:606px;width:1px;height:3px;background:#8a887f"></span>
<span class="a" style="left:527px;top:606px;width:1px;height:3px;background:#8a887f"></span>
<span class="a" style="left:575px;top:606px;width:1px;height:3px;background:#8a887f"></span>
<span class="a" style="left:623px;top:606px;width:1px;height:3px;background:#8a887f"></span>
<span class="a" style="left:671px;top:606px;width:1px;height:3px;background:#8a887f"></span>
<span class="a" style="left:719px;top:606px;width:1px;height:3px;background:#8a887f"></span>
<span class="a" style="left:767px;top:606px;width:1px;height:3px;background:#8a887f"></span>
<span class="a" style="left:815px;top:606px;width:1px;height:3px;background:#8a887f"></span>
<span class="a" style="left:863px;top:606px;width:1px;height:3px;background:#8a887f"></span>
<svg class="a" style="left:185px;top:589px" width="13" height="21" viewBox="0 0 13 21"><path d="M1.500 1.500h9l-4.500 5.500z" fill="#fff" stroke="#000"/><path d="M1.500 13.500l4.500-5.500l4.500 5.500z" fill="#fff" stroke="#000"/><rect x="1.500" y="13.500" width="9" height="6" fill="#fff" stroke="#000"/></svg>
<svg class="a" style="left:882px;top:596px" width="13" height="10" viewBox="0 0 13 10"><path d="M1.500 8.500l4.500-6l4.500 6z" fill="#fff" stroke="#000"/></svg>
<div class="a" style="left:8px;top:610px;width:899px;height:418px;background:#808080"></div>
<div class="a" style="left:166px;top:627px;width:741px;height:401px;background:#fff;border-left:1px solid #000;border-top:1px solid #000"></div>
<div class="a" style="left:214px;top:656px;width:1px;height:24px;background:#aaa"></div><div class="a" style="left:191px;top:679px;width:24px;height:1px;background:#aaa"></div>
<div class="a" style="left:215px;top:680px;width:81px;height:21px;background:#f00"></div>
<div class="a song nw" style="left:216px;top:680px;font-weight:bold;font-size:15.500px;line-height:21px">共用部分：<span style="color:#888;font:11px 'DejaVu Sans',sans-serif">↵</span></div>
<div class="a song nw" style="left:215px;top:703px;font-weight:bold;font-size:14.500px;line-height:21px">1.</div><span class="a" style="color:#777;font:9px/20px 'DejaVu Sans',sans-serif;left:230px;top:703px">→</span><div class="a song nw" style="left:243px;top:703px;font-weight:bold;font-size:15.500px;line-height:21px">标记:<span style="color:#888;font:11px 'DejaVu Sans',sans-serif">↵</span></div>
<div class="a nw" style="left:243px;top:722.5px;font:13px/21px 'Liberation Mono',monospace;letter-spacing:-.8px">1)</div><span class="a" style="color:#777;font:9px/20px 'DejaVu Sans',sans-serif;left:257px;top:722.5px">→</span>
<div class="a song nw" style="left:267px;top:722.5px;font-size:15px;letter-spacing:-1px;line-height:21px">此客户若<span class="wv">设计有附边</span>，必须在附边上用绿油字加所用板材型号，如：<span style="font-family:'Liberation Mono',monospace;font-size:13px;letter-spacing:-.8px">FR4</span>、<span style="font-family:'Liberation Mono',monospace;font-size:13px;letter-spacing:-.8px">RF-35</span>、<span style="font-family:'Liberation Mono',monospace;font-size:13px;letter-spacing:-.8px">RO4350</span>，<span style="font-family:'Liberation Mono',monospace;font-size:13px;letter-spacing:-.8px">RO4003</span><span style="letter-spacing:-7px">。。。</span>&nbsp; 等</div>
<div class="a song nw" style="left:267px;top:743px;font-size:15px;letter-spacing:-1px;line-height:21px">等，采用绿油字，留意避开流胶点，字可以按目前周期的线宽及字高，<span class="wv">没有附边的</span>不用加；<span style="color:#888;font:11px 'DejaVu Sans',sans-serif">↵</span></div>
<div class="a nw" style="left:243px;top:764.5px;font:13px/21px 'Liberation Mono',monospace;letter-spacing:-.8px">2)</div><span class="a" style="color:#777;font:9px/20px 'DejaVu Sans',sans-serif;left:257px;top:764.5px">→</span>
<div class="a song nw" style="left:267px;top:764.5px;font-size:15px;letter-spacing:-1px;line-height:21px">此客户若<span class="wv">设计有附边</span>，必须在附边上（加在字符层，若无字符层，增加一层字符层）加上快捷公司产品型</div>
<div class="a song nw" style="left:267px;top:785px;font-size:15px;letter-spacing:-1px;line-height:21px">号（如：<span style="font-family:'Liberation Serif',serif;font-size:14px;letter-spacing:0">8A001008A0</span>）<span style="font-family:'Liberation Serif',serif;letter-spacing:0">,</span>若无附边，则不加；<span style="color:#888;font:11px 'DejaVu Sans',sans-serif">↵</span></div>
<div class="a nw" style="left:243px;top:806px;font:13px/21px 'Liberation Mono',monospace;letter-spacing:-.8px">3)</div><span class="a" style="color:#777;font:9px/20px 'DejaVu Sans',sans-serif;left:257px;top:806px">→</span>
<div class="a song nw" style="left:267px;top:806px;font-size:15px;letter-spacing:-1px;line-height:21px">加我公司全套标记<span style="font-family:'Liberation Mono',monospace;font-size:13px;letter-spacing:-.8px">(</span>不含周期<span style="font-family:'Liberation Mono',monospace;font-size:13px;letter-spacing:-.8px">)</span>及顾客<b>板号</b>（对于有工艺边的需加在工艺边上）<span style="color:#888;font:11px 'DejaVu Sans',sans-serif">↵</span></div>
<div class="a nw" style="left:243px;top:826px;font:13px/21px 'Liberation Mono',monospace;letter-spacing:-.8px">4)</div><span class="a" style="color:#777;font:9px/20px 'DejaVu Sans',sans-serif;left:257px;top:826px">→</span>
<div class="a song nw" style="left:267px;top:826px;font-size:15px;letter-spacing:-1px;line-height:21px">顾客要求在单元板上<span class="wv">加如下</span>周期（无法加时需要与顾客确认）：<span style="color:#888;font:11px 'DejaVu Sans',sans-serif">↵</span></div>
<div class="a" style="left:285px;top:857px;width:454px;height:126px;border:1px solid #000"></div>
<div class="a song nw" style="left:286px;top:872px;font-size:13px;line-height:20px">:</div>
<div class="a song nw" style="left:339px;top:868px;font-size:15px;line-height:22px">大写字母</div>
<div class="a nw" style="left:502px;top:870px;font:12px/20px 'Liberation Mono',monospace">4</div>
<div class="a nw" style="left:602px;top:871px;font:12px/20px 'Liberation Mono',monospace">2</div>
<div class="a nw" style="left:703px;top:871px;font:12px/20px 'Liberation Mono',monospace">6</div>
<svg class="a" style="left:285px;top:857px" width="454" height="126" viewBox="285 857 454 126"><g stroke="#000" fill="none" stroke-width="1.200"><path d="M368.500 892v14M504.500 893v15M656.500 893.500v15M606.500 888v5.500h100v-5.500"/></g><g fill="#000"><path d="M364.500 903h8l-4 7zM500.500 904h8l-4 7zM652.500 906h8l-4 7z"/></g></svg>
<div class="a song" style="left:293px;top:912px;width:158px;height:65px;border:1px solid #000;font-size:13px;line-height:17.500px;padding:1px 1px;white-space:nowrap">供应商代号。<br>大写英文字母表示。<br>快捷 <span style="font:11px 'Liberation Sans',sans-serif">A</span></div>
<div class="a song" style="left:456px;top:914px;width:129px;height:46px;border:1px solid #000;font-size:13px;line-height:17.500px;padding:1px 1px;white-space:nowrap">年<br>以年份末位数表示。</div>
<div class="a song" style="left:594px;top:915px;width:129px;height:29px;border:1px solid #000;font-size:13px;line-height:16px;text-align:center">周</div>
<div class="a" style="left:740px;top:968px"><span style="color:#888;font:11px 'DejaVu Sans',sans-serif">↵</span></div>
<div class="a" style="left:217px;top:977px;width:66px;height:0;border-top:1px dotted #999"></div>
<div class="a" style="left:217px;top:1002px;width:66px;height:0;border-top:1px dotted #999"></div>
<div class="a song nw" style="left:285px;top:993px;font-size:15px;letter-spacing:-1px;line-height:21px">注意：对于有金手指的板，加在 <span style="font:11px 'Liberation Mono',monospace;letter-spacing:0">BOTTOM</span> <span class="wv">面金手指下方防焊区域如下图</span>：<span style="color:#888;font:11px 'DejaVu Sans',sans-serif">↵</span></div>
<div class="a" style="left:579px;top:1018px;width:160px;height:10px;background:linear-gradient(90deg,#2fa9a0,#8fd8d0 60%,#d0f0ec);border:1px solid #333;border-bottom:0"></div>
<div class="a" style="left:232px;top:822px;width:608px;height:180px;border:2.500px solid #35d835;box-shadow:0 0 4px 1px rgba(40,200,40,.5), inset 0 0 3px rgba(40,200,40,.35)"></div>
<div class="a" style="left:0;top:1028px;width:907px;height:6px;background:#d4d0c8;border-top:1px solid #fff"></div>
<div class="a" style="left:0px;top:1031px;width:1px;height:3px;background:#808080"></div>
<div class="a" style="left:49px;top:1031px;width:1px;height:3px;background:#808080"></div>
<div class="a" style="left:101px;top:1031px;width:1px;height:3px;background:#808080"></div>
<div class="a" style="left:252px;top:1031px;width:1px;height:3px;background:#808080"></div>
<div class="a" style="left:351px;top:1031px;width:1px;height:3px;background:#808080"></div>
<div class="a" style="left:440px;top:1031px;width:1px;height:3px;background:#808080"></div>
<div class="a" style="left:593px;top:1031px;width:1px;height:3px;background:#808080"></div>
<div class="a" style="left:745px;top:1031px;width:1px;height:3px;background:#808080"></div>
</div>
<div class="a" id="w2" style="left:906px;top:477px;width:1014px;height:557px;overflow:hidden">
<div class="a" style="left:0px;top:0px;width:1014px;height:557px;background:#e6e4dc;border-left:1px solid #fff;border-top:1px solid #fff"></div>
<div class="a" style="left:4px;top:4px;width:1010px;height:18px;background:linear-gradient(90deg,#808080,#c0c0c0)"></div>
<svg class="a" style="left:6px;top:5px" width="16" height="16" viewBox="0 0 16 16"><rect x="3.500" y=".500" width="11" height="14" fill="#fff" stroke="#7a8ab8"/><rect x=".500" y="3" width="10" height="10" fill="#3858b8" stroke="#203078"/><text x="5.500" y="11.500" font-size="9" font-weight="bold" font-family="Liberation Sans,sans-serif" fill="#fff" text-anchor="middle">W</text></svg>
<div class="a nw" style="left:24px;top:4px;height:18px;color:#e2e2e2;font:bold 14px/18px 'Liberation Serif','Noto Serif CJK SC',serif;letter-spacing:.55px">加工要求.doc - Microsoft Word</div>
<div class="a" style="left:4px;top:22px;width:1010px;height:77px;background:#f1efe9"></div>
<div class="a" style="left:6px;top:23px;width:1008px;height:24px;background:linear-gradient(#faf9f6,#efede6 55%,#d3cfc3)"></div>
<div class="a" style="left:6px;top:48px;width:1008px;height:24px;background:linear-gradient(#faf9f6,#efede6 55%,#d3cfc3)"></div>
<div class="a" style="left:9px;top:26px;width:3px;height:17px;background:repeating-linear-gradient(#b0aca0 0 2px,transparent 2px 4px)"></div>
<div class="a" style="left:9px;top:51px;width:3px;height:17px;background:repeating-linear-gradient(#b0aca0 0 2px,transparent 2px 4px)"></div>
<div class="a" style="left:9px;top:77px;width:3px;height:17px;background:repeating-linear-gradient(#b0aca0 0 2px,transparent 2px 4px)"></div>
<svg class="a" style="left:16px;top:26px" width="16" height="16" viewBox="0 0 16 16"><path d="M3.500 1.500h6l3 3v10h-9z" fill="#fff" stroke="#6a6a6a"/><path d="M9.500 1.500v3h3" fill="#e8e8f0" stroke="#6a6a6a"/></svg>
<svg class="a" style="left:39px;top:26px" width="16" height="16" viewBox="0 0 16 16"><path d="M1 4h5l1 1.500h5v2H4l-3 6z" fill="#f0c040" stroke="#8a6a10" stroke-width=".8"/><path d="M4 7.500h11l-3 6.500H1z" fill="#fbe090" stroke="#8a6a10" stroke-width=".8"/><path d="M10 2.500q3-1.500 4 1.500" fill="none" stroke="#3060c0"/></svg>
<svg class="a" style="left:63px;top:26px" width="16" height="16" viewBox="0 0 16 16"><rect x="1.500" y="1.500" width="13" height="13" fill="#4a58c8" stroke="#20287a"/><rect x="4" y="2" width="8" height="5" fill="#e8ecf8"/><rect x="5" y="9.500" width="6.500" height="5" fill="#c0c4d0"/><rect x="6" y="10.500" width="2" height="3" fill="#20287a"/></svg>
<svg class="a" style="left:86px;top:26px" width="16" height="16" viewBox="0 0 16 16"><path d="M3.500 1.500h6l3 3v10h-9z" fill="#fff" stroke="#6a6a6a"/><circle cx="11" cy="11.500" r="3.600" fill="#e03020"/><rect x="9" y="10.800" width="4" height="1.500" fill="#fff"/></svg>
<svg class="a" style="left:109px;top:26px" width="16" height="16" viewBox="0 0 16 16"><path d="M2 6l5-4h6l1 4v8H2z" fill="#e8e8ec" stroke="#70707c"/><rect x="3.500" y="8.500" width="9" height="4" fill="#fff" stroke="#8a8a94" stroke-width=".7"/><rect x="11" y="5" width="2" height="2" fill="#d03030"/></svg>
<span class="a" style="left:131px;top:25px;width:2px;height:18px;border-left:1px solid #a8a598;border-right:1px solid #fff"></span>
<svg class="a" style="left:137px;top:26px" width="16" height="16" viewBox="0 0 16 16"><path d="M4 2h8l1 4H3z" fill="#fff" stroke="#70707c" stroke-width=".8"/><rect x="1.500" y="6" width="13" height="6" rx="1" fill="#c8ccd4" stroke="#5a5e68"/><rect x="3.500" y="10.500" width="9" height="3.500" fill="#f4f4f4" stroke="#70707c" stroke-width=".7"/><rect x="10.500" y="8" width="2" height="1.500" fill="#30c030"/></svg>
<svg class="a" style="left:19px;top:53px" width="16" height="16" viewBox="0 0 16 16"><text x="0" y="12" font-size="14" font-weight="bold" font-style="italic" font-family="Liberation Serif,serif" fill="#6070c8">A</text><text x="6" y="13" font-size="12" font-weight="bold" font-family="Liberation Serif,serif" fill="#a050a0">A</text><path d="M0 14.500h14" stroke="#8060c0"/></svg>
<span class="a" style="left:39px;top:53px;width:82px;height:17px;background:#fff"></span><span class="a hei nw" style="left:42px;top:53px;font-size:12px;line-height:17px;word-spacing:3px">正文 + 小四</span><span class="a" style="left:109px;top:54px;width:11px;height:15px;background:#e6e3da"></span><span class="a" style="left:112px;top:60px;width:0;height:0;border:3px solid transparent;border-top:3px solid #000;border-bottom:0"></span>
<span class="a" style="left:123px;top:53px;width:120px;height:17px;background:#fff"></span>
<span class="a hei nw" style="left:21.0px;top:77px;font-size:12px;line-height:18px">文件(<u>F</u>)</span>
<span class="a hei nw" style="left:79.5px;top:77px;font-size:12px;line-height:18px">编辑(<u>E</u>)</span>
<span class="a hei nw" style="left:138.0px;top:77px;font-size:12px;line-height:18px">视图(<u>V</u>)</span>
<div class="a" style="left:5px;top:99px;width:1009px;height:452px;background:#d4d0c8;border-left:1.500px solid #55534e"></div>
<div class="a" style="left:5px;top:99px;width:1009px;height:1px;background:#55534e"></div>
<div class="a" style="left:10px;top:104px;width:15px;height:14px;background:#fff;border:1px solid #888"></div><div class="a" style="left:14px;top:108px;width:2px;height:7px;background:#000"></div><div class="a" style="left:14px;top:113px;width:7px;height:2px;background:#000"></div>
<div class="a" style="left:29px;top:105px;width:32px;height:12px;background:#808080"></div>
<div class="a" style="left:61px;top:105px;width:953px;height:12px;background:#fff"></div>
<div class="a" style="left:30.5px;top:109px;width:1px;height:4px;background:#222"></div>
<div class="a" style="left:46.200000000000045px;top:109px;width:1px;height:4px;background:#222"></div>
<div class="a" style="left:61.89999999999998px;top:109px;width:1px;height:4px;background:#222"></div>
<div class="a" style="left:77.60000000000002px;top:109px;width:1px;height:4px;background:#222"></div>
<div class="a" style="left:93.29999999999995px;top:109px;width:1px;height:4px;background:#222"></div>
<div class="a" style="left:109.0px;top:109px;width:1px;height:4px;background:#222"></div>
<div class="a" style="left:124.70000000000005px;top:109px;width:1px;height:4px;background:#222"></div>
<div class="a" style="left:140.4000000000001px;top:109px;width:1px;height:4px;background:#222"></div>
<svg class="a" style="left:97px;top:101px" width="13" height="13" viewBox="0 0 13 13"><path d="M1.500 1.500h9l-4.500 6z" fill="#fff" stroke="#000"/><text x="6" y="12" font-size="7" font-family="Liberation Sans,sans-serif" text-anchor="middle">2</text></svg>
<svg class="a" style="left:139px;top:107px" width="13" height="16" viewBox="0 0 13 16"><path d="M1.500 8.500l4.500-6l4.500 6z" fill="#fff" stroke="#000"/><rect x="1.500" y="8.500" width="9" height="6" fill="#fff" stroke="#000"/></svg>
<div class="a" style="left:11px;top:123px;width:14px;height:97px;background:#808080"></div>
<div class="a" style="left:11px;top:220px;width:14px;height:331px;background:#fff"></div>
<div class="a nw" style="left:11px;top:118.39999999999998px;width:14px;height:14px;text-align:center;font:8.500px/14px 'Liberation Sans',sans-serif;transform:rotate(-90deg)">3</div>
<div class="a nw" style="left:11px;top:149.69999999999993px;width:14px;height:14px;text-align:center;font:8.500px/14px 'Liberation Sans',sans-serif;transform:rotate(-90deg)">2</div>
<div class="a nw" style="left:11px;top:181.0px;width:14px;height:14px;text-align:center;font:8.500px/14px 'Liberation Sans',sans-serif;transform:rotate(-90deg)">1</div>
<div class="a nw" style="left:11px;top:243.5999999999999px;width:14px;height:14px;text-align:center;font:8.500px/14px 'Liberation Sans',sans-serif;transform:rotate(-90deg)">1</div>
<div class="a nw" style="left:11px;top:274.9px;width:14px;height:14px;text-align:center;font:8.500px/14px 'Liberation Sans',sans-serif;transform:rotate(-90deg)">2</div>
<div class="a nw" style="left:11px;top:306.19999999999993px;width:14px;height:14px;text-align:center;font:8.500px/14px 'Liberation Sans',sans-serif;transform:rotate(-90deg)">3</div>
<div class="a nw" style="left:11px;top:337.5px;width:14px;height:14px;text-align:center;font:8.500px/14px 'Liberation Sans',sans-serif;transform:rotate(-90deg)">4</div>
<div class="a nw" style="left:11px;top:368.79999999999995px;width:14px;height:14px;text-align:center;font:8.500px/14px 'Liberation Sans',sans-serif;transform:rotate(-90deg)">5</div>
<div class="a nw" style="left:11px;top:400.0999999999999px;width:14px;height:14px;text-align:center;font:8.500px/14px 'Liberation Sans',sans-serif;transform:rotate(-90deg)">6</div>
<div class="a nw" style="left:11px;top:431.4px;width:14px;height:14px;text-align:center;font:8.500px/14px 'Liberation Sans',sans-serif;transform:rotate(-90deg)">7</div>
<div class="a nw" style="left:11px;top:462.69999999999993px;width:14px;height:14px;text-align:center;font:8.500px/14px 'Liberation Sans',sans-serif;transform:rotate(-90deg)">8</div>
<div class="a nw" style="left:11px;top:494.0px;width:14px;height:14px;text-align:center;font:8.500px/14px 'Liberation Sans',sans-serif;transform:rotate(-90deg)">9</div>
<div class="a nw" style="left:11px;top:525.3px;width:14px;height:14px;text-align:center;font:8.500px/14px 'Liberation Sans',sans-serif;transform:rotate(-90deg)">10</div>
<div class="a" style="left:15px;top:140.54999999999995px;width:6px;height:1.500px;background:#222"></div>
<div class="a" style="left:15px;top:171.8499999999999px;width:6px;height:1.500px;background:#222"></div>
<div class="a" style="left:15px;top:203.14999999999998px;width:6px;height:1.500px;background:#222"></div>
<div class="a" style="left:15px;top:234.44999999999993px;width:6px;height:1.500px;background:#222"></div>
<div class="a" style="left:15px;top:265.75px;width:6px;height:1.500px;background:#222"></div>
<div class="a" style="left:15px;top:297.04999999999995px;width:6px;height:1.500px;background:#222"></div>
<div class="a" style="left:15px;top:328.3499999999999px;width:6px;height:1.500px;background:#222"></div>
<div class="a" style="left:15px;top:359.65px;width:6px;height:1.500px;background:#222"></div>
<div class="a" style="left:15px;top:390.94999999999993px;width:6px;height:1.500px;background:#222"></div>
<div class="a" style="left:15px;top:422.25px;width:6px;height:1.500px;background:#222"></div>
<div class="a" style="left:15px;top:453.54999999999995px;width:6px;height:1.500px;background:#222"></div>
<div class="a" style="left:15px;top:484.8499999999999px;width:6px;height:1.500px;background:#222"></div>
<div class="a" style="left:15px;top:516.15px;width:6px;height:1.500px;background:#222"></div>
<div class="a" style="left:15px;top:547.45px;width:6px;height:1.500px;background:#222"></div>
<div class="a" style="left:29px;top:123px;width:985px;height:15px;background:#7b9fd3"></div>
<div class="a" style="left:29px;top:138px;width:985px;height:413px;background:#fff"></div>
<div class="a" style="left:61px;top:185px;width:1px;height:36px;background:#aaa"></div><div class="a" style="left:29px;top:220px;width:33px;height:1px;background:#aaa"></div>
<div class="a" style="left:59px;top:166px"><span style="color:#777;font:13px 'DejaVu Sans',sans-serif;letter-spacing:0">↵</span></div>
<div class="a" style="left:65px;top:236px;width:2px;height:2px;background:#6a6a6a"></div>
<div class="a" style="left:77px;top:236px;width:2px;height:2px;background:#6a6a6a"></div>
<div class="a" style="left:89px;top:236px;width:2px;height:2px;background:#6a6a6a"></div>
<div class="a" style="left:101px;top:236px;width:2px;height:2px;background:#6a6a6a"></div>
<div class="a" style="left:113px;top:236px;width:2px;height:2px;background:#6a6a6a"></div>
<div class="a nw" style="left:123px;top:221px;font:italic 25px/30px 'Liberation Serif','Noto Serif CJK SC',serif;color:#1a1ac8">b.所</div>
<div class="a" style="left:65px;top:266px;width:2px;height:2px;background:#6a6a6a"></div>
<div class="a" style="left:77px;top:266px;width:2px;height:2px;background:#6a6a6a"></div>
<div class="a" style="left:89px;top:266px;width:2px;height:2px;background:#6a6a6a"></div>
<div class="a" style="left:97px;top:260px"><span style="color:#777;font:13px 'DejaVu Sans',sans-serif;letter-spacing:0">↵</span></div>
<div class="a song nw" style="left:62px;top:285px;font-size:21px;line-height:30px;color:#222">4）</div><span class="a" style="color:#666;font:13px/30px 'DejaVu Sans',sans-serif;left:97px;top:286px">→</span><div class="a song nw" style="left:116px;top:285px;font-size:21.800px;letter-spacing:-.800px;line-height:30px;color:#222">其它要求。<span style="color:#777;font:13px 'DejaVu Sans',sans-serif;letter-spacing:0">↵</span></div>
<div class="a" style="left:146px;top:336px;width:823px;height:65px;background:#ff0"></div><div class="a" style="left:146px;top:401px;width:120px;height:33px;background:#ff0"></div>
<div class="a song nw" style="left:105px;top:338px;font-size:21px;line-height:32px;color:#2535b0">1)</div><span class="a" style="color:#666;font:13px/30px 'DejaVu Sans',sans-serif;left:129px;top:339px">→</span>
<div class="a song" style="left:148px;top:338px;width:819px;font-size:22.400px;line-height:32.500px;color:#00008a;text-align:justify;text-align-last:justify;white-space:nowrap">单板内需要做元件的丝印，单板丝印要求请依照《PCB 通用质量要求》标记规</div>
<div class="a song" style="left:148px;top:370.5px;width:819px;font-size:22.400px;line-height:32.500px;color:#00008a;text-align:justify;text-align-last:justify;white-space:nowrap">则将我司板号、厂家 LOGO、UL 无铅标识、供应商代号及生产周期做在单板的</div>
<div class="a song nw" style="left:148px;top:403px;font-size:22.400px;line-height:32.500px;color:#00008a;letter-spacing:.9px">空白处）；<span style="color:#777;font:13px 'DejaVu Sans',sans-serif;letter-spacing:0">↵</span></div>
<div class="a" style="left:104px;top:454px;width:698px;height:31px;background:#ff0"></div>
<div class="a song nw" style="left:104px;top:456px;font-size:21px;line-height:32px;color:#00008a">2)</div><span class="a" style="color:#666;font:13px/30px 'DejaVu Sans',sans-serif;left:127px;top:457px">→</span>
<div class="a song nw" style="left:148.5px;top:456px;font-size:21.600px;letter-spacing:-.900px;line-height:32px;color:#00008a">电路板边缘光滑无毛刺、白化、分层，无阻焊漆脱落及<span class="wv">线路露铜等</span>现象<span style="letter-spacing:0">;</span><span style="color:#777;font:13px 'DejaVu Sans',sans-serif;letter-spacing:0">↵</span></div>
<div class="a" style="left:104px;top:507px;width:245px;height:31px;background:#ff0"></div>
<div class="a song nw" style="left:104px;top:508px;font-size:21px;line-height:32px;color:#00008a">3)</div><span class="a" style="color:#666;font:13px/30px 'DejaVu Sans',sans-serif;left:127px;top:509px">→</span>
<div class="a song nw" style="left:147px;top:508px;font-size:21.600px;letter-spacing:-.900px;line-height:32px;color:#00008a">翘曲度不得超过<span style="letter-spacing:0"> 0.7%;</span><span style="color:#777;font:13px 'DejaVu Sans',sans-serif;letter-spacing:0">↵</span></div>
<div class="a" style="left:994px;top:419px;width:48px;height:48px;border-radius:50%;background:radial-gradient(circle at 50% 25%,#8ee694,#46c052 60%,#3cb84a);border:2px solid #d8d8e0;box-shadow:0 3px 6px rgba(0,0,0,.35)"></div>
<div class="a nw" style="left:1001px;top:436px;font:bold 10px/14px 'Liberation Sans',sans-serif;color:#fff">42</div>
<div class="a" style="left:0px;top:551px;width:1014px;height:6px;background:#d4d0c8;border-top:1px solid #fff"></div>
<div class="a" style="left:52px;top:554px;width:1px;height:3px;background:#808080"></div>
<div class="a" style="left:140px;top:554px;width:1px;height:3px;background:#808080"></div>
<div class="a" style="left:290px;top:554px;width:1px;height:3px;background:#808080"></div>
<div class="a" style="left:440px;top:554px;width:1px;height:3px;background:#808080"></div>
<div class="a" style="left:694px;top:554px;width:1px;height:3px;background:#808080"></div>
<div class="a" style="left:919px;top:554px;width:1px;height:3px;background:#808080"></div>
</div>
<style>#cam{left:1062px;top:45px;width:870px;height:683px;overflow:hidden;border-radius:8px 0 0 8px;background:#c4d9f7;border:1px solid #4a7496;font-family:"Liberation Sans","Noto Sans CJK SC",sans-serif}#cam .t13{font-size:13px;line-height:23px;white-space:nowrap;color:#111}.inp{background:#d4d0c8;border:1px solid;border-color:#7a7870 #fff #fff #7a7870;box-shadow:inset 1px 1px 0 #55534e;font-size:14.200px;line-height:22px;padding-left:2px;color:#333;white-space:nowrap;overflow:hidden;height:24px}.lab{font-size:14px;line-height:23px;white-space:nowrap;color:#222}.btn{width:75px;height:23px;border:1px solid #85a3d8;border-radius:3px;background:linear-gradient(#e3eefc,#c9dcf8 45%,#a9c6f1 50%,#c3d8f7);color:#15428b;font-size:12.300px;line-height:20px;text-align:center;white-space:nowrap;box-shadow:0 1px 0 #f4f8ff}.btn u{font:12px "Liberation Mono",monospace;letter-spacing:-.7px;margin-left:2px}.btn.d{background:linear-gradient(#f0f4fa,#e1e8f2);border-color:#aab8cc;color:#9a9a9a}.m65{font:12px "Liberation Mono",monospace;letter-spacing:-.7px}.m7{font:13px "Liberation Mono",monospace;letter-spacing:-.8px}.sbb{width:16px;height:16px;background:#d4d0c8;border:1px solid;border-color:#fff #404040 #404040 #fff}</style>
<div class="a" id="cam">
<div class="a" style="left:0px;top:0px;width:870px;height:30px;background:linear-gradient(#e6eefa,#dfe9f8 42%,#cfddf4 46%,#d4e2f8)"></div>
<div class="a nw" style="left:490px;top:4px;font:bold 13px/18px 'Liberation Serif','Noto Serif CJK SC',serif;color:#3f6db3;letter-spacing:.800px">工程系统 版本：<span style="letter-spacing:2.400px">1.1.3.6-[</span>流程指示]</div>
<div class="a" style="left:0px;top:29px;width:870px;height:1px;background:#a9c3ea"></div>
<div class="a" style="left:0px;top:30px;width:870px;height:27px;background:#bfd9fd"></div>
<div class="a nw" style="left:9px;top:35px;font-size:12px;line-height:18px;color:#1c4590"><span style="font:12px 'Liberation Mono',monospace;letter-spacing:-1.200px">CAM</span>工程</div>
<div class="a nw" style="left:66px;top:35px;font-size:12px;line-height:18px;color:#1c4590">公用模块</div>
<div class="a nw" style="left:127px;top:35px;font-size:12px;line-height:18px;color:#1c4590">常用工具</div>
<div class="a nw" style="left:187px;top:35px;font-size:12px;line-height:18px;color:#1c4590">退出</div>
<div class="a nw" style="left:223px;top:35px;font-size:12px;line-height:18px;color:#1c4590">注销</div>
<div class="a nw" style="left:258px;top:35px;font-size:12px;line-height:18px;color:#1c4590">帮助</div>
<span class="a" style="left:292px;top:43px;width:0;height:0;border:3px solid transparent;border-top:3px solid #1c4590;border-bottom:0"></span>
<div class="a" style="left:304px;top:33px;width:100px;height:21px;background:linear-gradient(#f4f8fe,#d6e5fb);border:1px solid #c9dcf6"></div><span class="a" style="left:394px;top:43px;width:0;height:0;border:3px solid transparent;border-top:3px solid #1c4590;border-bottom:0"></span>
<div class="a" style="left:5px;top:58px;width:65px;height:594px;background:linear-gradient(#dbe7fa,#c9dcf9 40%,#b3cff8);border-left:1px solid #aec6ea;border-top:1px solid #eef4fd"></div>
<div class="a" style="left:7px;top:64px;width:58px;height:45px;border:1px solid #9db7e2;border-radius:3px;background:linear-gradient(#e8f0fc,#c9dcf8 48%,#b4cef4 52%,#d0e0f9)"></div>
<div class="a" style="left:26px;top:68px;width:21px;height:21px;border-radius:50%;background:radial-gradient(circle at 50% 62%,#ffd878,#f59020 45%,#d84808 80%,#a02800);border:1.500px solid #5a1600"></div>
<svg class="a" style="left:28px;top:70px" width="17" height="17" viewBox="0 0 17 17"><path d="M8.500 2.500v11.500M4.300 13.500q-3-5.500 1.700-11M12.700 13.500q3-5.500-1.700-11" stroke="#fff6d8" stroke-width="1.800" fill="none" opacity=".92"/></svg>
<div class="a nw" style="left:11px;top:89px;font-size:12.500px;line-height:20px;color:#1c4590">流程指示</div>
<div class="a" style="left:70px;top:58px;width:249px;height:592px;background:#000"></div>
<div class="a" style="left:72px;top:60px;width:245px;height:411px;background:#f2f6fd;overflow:hidden" id="ptab">
<div class="a t13" style="left:0px;top:4px;width:81px;height:20px;background:linear-gradient(#fde2b0,#f9c878 45%,#f5ae48);border-right:1px solid #c5cddb;border-bottom:1px solid #b5bfd0;padding-left:5px;line-height:20px">工艺名称</div>
<div class="a t13" style="left:81px;top:4px;width:55px;height:20px;background:linear-gradient(#fafbfd,#e9edf4 60%,#dfe4ec);border-right:1px solid #c5cddb;border-bottom:1px solid #b5bfd0;padding-left:5px;line-height:20px">编写</div>
<div class="a t13" style="left:136px;top:4px;width:55px;height:20px;background:linear-gradient(#fafbfd,#e9edf4 60%,#dfe4ec);border-right:1px solid #c5cddb;border-bottom:1px solid #b5bfd0;padding-left:5px;line-height:20px">审核</div>
<div class="a t13" style="left:191px;top:4px;width:54px;height:20px;background:linear-gradient(#fafbfd,#e9edf4 60%,#dfe4ec);border-right:1px solid #c5cddb;border-bottom:1px solid #b5bfd0;padding-left:5px;line-height:20px">状态</div>
<div class="a" style="left:0;top:24px;width:245px;height:23px;background:#dce9fb;border-bottom:1px solid #eef4fd">
<span class="a t13" style="left:0px;top:0;width:81px;height:22px;border-right:1px solid #eaf1fc;padding-left:4px;color:#111">负片电镀</span>
<span class="a t13" style="left:81px;top:0;width:55px;height:22px;border-right:1px solid #eaf1fc;padding-left:4px;color:#111">谭江</span>
<span class="a t13" style="left:136px;top:0;width:55px;height:22px;border-right:1px solid #eaf1fc;padding-left:4px;color:#111">谭江</span>
<span class="a t13" style="left:191px;top:0;width:54px;height:22px;border-right:1px solid #eaf1fc;padding-left:4px;color:#111">已审核</span>
</div>
<div class="a" style="left:0;top:47px;width:245px;height:23px;background:#dce9fb;border-bottom:1px solid #eef4fd">
<span class="a t13" style="left:0px;top:0;width:81px;height:22px;border-right:1px solid #eaf1fc;padding-left:4px;color:#111">负电镀磨板</span>
<span class="a t13" style="left:81px;top:0;width:55px;height:22px;border-right:1px solid #eaf1fc;padding-left:4px;color:#111">谭江</span>
<span class="a t13" style="left:136px;top:0;width:55px;height:22px;border-right:1px solid #eaf1fc;padding-left:4px;color:#111">谭江</span>
<span class="a t13" style="left:191px;top:0;width:54px;height:22px;border-right:1px solid #eaf1fc;padding-left:4px;color:#111">已审核</span>
</div>
<div class="a" style="left:0;top:70px;width:245px;height:23px;background:#dce9fb;border-bottom:1px solid #eef4fd">
<span class="a t13" style="left:0px;top:0;width:81px;height:22px;border-right:1px solid #eaf1fc;padding-left:4px;color:#111">负片干膜</span>
<span class="a t13" style="left:81px;top:0;width:55px;height:22px;border-right:1px solid #eaf1fc;padding-left:4px;color:#111">谭江</span>
<span class="a t13" style="left:136px;top:0;width:55px;height:22px;border-right:1px solid #eaf1fc;padding-left:4px;color:#111">谭江</span>
<span class="a t13" style="left:191px;top:0;width:54px;height:22px;border-right:1px solid #eaf1fc;padding-left:4px;color:#111">已审核</span>
</div>
<div class="a" style="left:0;top:93px;width:245px;height:23px;background:#dce9fb;border-bottom:1px solid #eef4fd">
<span class="a t13" style="left:0px;top:0;width:81px;height:22px;border-right:1px solid #eaf1fc;padding-left:4px;color:#111">干膜检查</span>
<span class="a t13" style="left:81px;top:0;width:55px;height:22px;border-right:1px solid #eaf1fc;padding-left:4px;color:#111">谭江</span>
<span class="a t13" style="left:136px;top:0;width:55px;height:22px;border-right:1px solid #eaf1fc;padding-left:4px;color:#111">谭江</span>
<span class="a t13" style="left:191px;top:0;width:54px;height:22px;border-right:1px solid #eaf1fc;padding-left:4px;color:#111">已审核</span>
</div>
<div class="a" style="left:0;top:116px;width:245px;height:23px;background:#dce9fb;border-bottom:1px solid #eef4fd">
<span class="a t13" style="left:0px;top:0;width:81px;height:22px;border-right:1px solid #eaf1fc;padding-left:4px;color:#111">负片蚀刻</span>
<span class="a t13" style="left:81px;top:0;width:55px;height:22px;border-right:1px solid #eaf1fc;padding-left:4px;color:#111">谭江</span>
<span class="a t13" style="left:136px;top:0;width:55px;height:22px;border-right:1px solid #eaf1fc;padding-left:4px;color:#111">谭江</span>
<span class="a t13" style="left:191px;top:0;width:54px;height:22px;border-right:1px solid #eaf1fc;padding-left:4px;color:#111">已审核</span>
</div>
<div class="a" style="left:0;top:139px;width:245px;height:23px;background:#dce9fb;border-bottom:1px solid #eef4fd">
<span class="a t13" style="left:0px;top:0;width:81px;height:22px;border-right:1px solid #eaf1fc;padding-left:4px;color:#111">外层<span class="m65">AOI</span></span>
<span class="a t13" style="left:81px;top:0;width:55px;height:22px;border-right:1px solid #eaf1fc;padding-left:4px;color:#111">谭江</span>
<span class="a t13" style="left:136px;top:0;width:55px;height:22px;border-right:1px solid #eaf1fc;padding-left:4px;color:#111">谭江</span>
<span class="a t13" style="left:191px;top:0;width:54px;height:22px;border-right:1px solid #eaf1fc;padding-left:4px;color:#111">已审核</span>
</div>
<div class="a" style="left:0;top:162px;width:245px;height:23px;background:#dce9fb;border-bottom:1px solid #eef4fd">
<span class="a t13" style="left:0px;top:0;width:81px;height:22px;border-right:1px solid #eaf1fc;padding-left:4px;color:#111">阻焊塞孔</span>
<span class="a t13" style="left:81px;top:0;width:55px;height:22px;border-right:1px solid #eaf1fc;padding-left:4px;color:#111">谭江</span>
<span class="a t13" style="left:136px;top:0;width:55px;height:22px;border-right:1px solid #eaf1fc;padding-left:4px;color:#111">谭江</span>
<span class="a t13" style="left:191px;top:0;width:54px;height:22px;border-right:1px solid #eaf1fc;padding-left:4px;color:#111">已审核</span>
</div>
<div class="a" style="left:0;top:185px;width:245px;height:23px;background:#dce9fb;border-bottom:1px solid #eef4fd">
<span class="a t13" style="left:0px;top:0;width:81px;height:22px;border-right:1px solid #eaf1fc;padding-left:4px;color:#111">阻焊</span>
<span class="a t13" style="left:81px;top:0;width:55px;height:22px;border-right:1px solid #eaf1fc;padding-left:4px;color:#111">谭江</span>
<span class="a t13" style="left:136px;top:0;width:55px;height:22px;border-right:1px solid #eaf1fc;padding-left:4px;color:#111">谭江</span>
<span class="a t13" style="left:191px;top:0;width:54px;height:22px;border-right:1px solid #eaf1fc;padding-left:4px;color:#111">已审核</span>
</div>
<div class="a" style="left:0;top:208px;width:245px;height:23px;background:#dce9fb;border-bottom:1px solid #eef4fd">
<span class="a t13" style="left:0px;top:0;width:81px;height:22px;border-right:1px solid #eaf1fc;padding-left:4px;color:#111">阻焊检查</span>
<span class="a t13" style="left:81px;top:0;width:55px;height:22px;border-right:1px solid #eaf1fc;padding-left:4px;color:#111">谭江</span>
<span class="a t13" style="left:136px;top:0;width:55px;height:22px;border-right:1px solid #eaf1fc;padding-left:4px;color:#111">谭江</span>
<span class="a t13" style="left:191px;top:0;width:54px;height:22px;border-right:1px solid #eaf1fc;padding-left:4px;color:#111">已审核</span>
</div>
<div class="a" style="left:0;top:231px;width:245px;height:23px;background:linear-gradient(#fcdca0,#f9be60 50%,#f7b048 55%,#fbd490);border-bottom:1px solid #eef4fd;outline:1px dotted #7a5a20;outline-offset:-1px">
<span class="a t13" style="left:0px;top:0;width:81px;height:22px;padding-left:4px;color:#111">字符</span>
<span class="a t13" style="left:81px;top:0;width:55px;height:22px;padding-left:4px;color:#111">谭江</span>
<span class="a t13" style="left:136px;top:0;width:55px;height:22px;padding-left:4px;color:#111">谭江</span>
<span class="a t13" style="left:191px;top:0;width:54px;height:22px;padding-left:4px;color:#111">已审核</span>
</div>
<div class="a" style="left:0;top:254px;width:245px;height:23px;background:#dce9fb;border-bottom:1px solid #eef4fd">
<span class="a t13" style="left:0px;top:0;width:81px;height:22px;border-right:1px solid #eaf1fc;padding-left:4px;color:#111">有铅喷锡</span>
<span class="a t13" style="left:81px;top:0;width:55px;height:22px;border-right:1px solid #eaf1fc;padding-left:4px;color:#111">谭江</span>
<span class="a t13" style="left:136px;top:0;width:55px;height:22px;border-right:1px solid #eaf1fc;padding-left:4px;color:#111">谭江</span>
<span class="a t13" style="left:191px;top:0;width:54px;height:22px;border-right:1px solid #eaf1fc;padding-left:4px;color:#111">已审核</span>
</div>
<div class="a" style="left:0;top:277px;width:245px;height:23px;background:#dce9fb;border-bottom:1px solid #eef4fd">
<span class="a t13" style="left:0px;top:0;width:81px;height:22px;border-right:1px solid #eaf1fc;padding-left:4px;color:#111">电子测试</span>
<span class="a t13" style="left:81px;top:0;width:55px;height:22px;border-right:1px solid #eaf1fc;padding-left:4px;color:#111">谭江</span>
<span class="a t13" style="left:136px;top:0;width:55px;height:22px;border-right:1px solid #eaf1fc;padding-left:4px;color:#111">谭江</span>
<span class="a t13" style="left:191px;top:0;width:54px;height:22px;border-right:1px solid #eaf1fc;padding-left:4px;color:#111">已审核</span>
</div>
<div class="a" style="left:0;top:300px;width:245px;height:23px;background:#dce9fb;border-bottom:1px solid #eef4fd">
<span class="a t13" style="left:0px;top:0;width:81px;height:22px;border-right:1px solid #eaf1fc;padding-left:4px;color:#e01818">铣板</span>
<span class="a t13" style="left:81px;top:0;width:55px;height:22px;border-right:1px solid #eaf1fc;padding-left:4px;color:#e01818">谭江</span>
<span class="a t13" style="left:136px;top:0;width:55px;height:22px;border-right:1px solid #eaf1fc;padding-left:4px;color:#e01818"></span>
<span class="a t13" style="left:191px;top:0;width:54px;height:22px;border-right:1px solid #eaf1fc;padding-left:4px;color:#e01818">已回退</span>
</div>
<div class="a" style="left:0;top:323px;width:245px;height:23px;background:#dce9fb;border-bottom:1px solid #eef4fd">
<span class="a t13" style="left:0px;top:0;width:81px;height:22px;border-right:1px solid #eaf1fc;padding-left:4px;color:#111">功能检查</span>
<span class="a t13" style="left:81px;top:0;width:55px;height:22px;border-right:1px solid #eaf1fc;padding-left:4px;color:#111">谭江</span>
<span class="a t13" style="left:136px;top:0;width:55px;height:22px;border-right:1px solid #eaf1fc;padding-left:4px;color:#111">谭江</span>
<span class="a t13" style="left:191px;top:0;width:54px;height:22px;border-right:1px solid #eaf1fc;padding-left:4px;color:#111">已审核</span>
</div>
<div class="a" style="left:0;top:346px;width:245px;height:23px;background:#dce9fb;border-bottom:1px solid #eef4fd">
<span class="a t13" style="left:0px;top:0;width:81px;height:22px;border-right:1px solid #eaf1fc;padding-left:4px;color:#111">终检</span>
<span class="a t13" style="left:81px;top:0;width:55px;height:22px;border-right:1px solid #eaf1fc;padding-left:4px;color:#111">汪朝文</span>
<span class="a t13" style="left:136px;top:0;width:55px;height:22px;border-right:1px solid #eaf1fc;padding-left:4px;color:#111"></span>
<span class="a t13" style="left:191px;top:0;width:54px;height:22px;border-right:1px solid #eaf1fc;padding-left:4px;color:#111">已编写</span>
</div>
<div class="a" style="left:0;top:369px;width:245px;height:23px;background:#dce9fb;border-bottom:1px solid #eef4fd">
<span class="a t13" style="left:0px;top:0;width:81px;height:22px;border-right:1px solid #eaf1fc;padding-left:4px;color:#111">包装</span>
<span class="a t13" style="left:81px;top:0;width:55px;height:22px;border-right:1px solid #eaf1fc;padding-left:4px;color:#111">谭江</span>
<span class="a t13" style="left:136px;top:0;width:55px;height:22px;border-right:1px solid #eaf1fc;padding-left:4px;color:#111">谭江</span>
<span class="a t13" style="left:191px;top:0;width:54px;height:22px;border-right:1px solid #eaf1fc;padding-left:4px;color:#111">已审核</span>
</div>
<div class="a" style="left:0;top:392px;width:245px;height:23px;background:#dce9fb;border-bottom:1px solid #eef4fd">
<span class="a t13" style="left:0px;top:0;width:81px;height:22px;border-right:1px solid #eaf1fc;padding-left:4px;color:#111">成品仓</span>
<span class="a t13" style="left:81px;top:0;width:55px;height:22px;border-right:1px solid #eaf1fc;padding-left:4px;color:#111">谭江</span>
<span class="a t13" style="left:136px;top:0;width:55px;height:22px;border-right:1px solid #eaf1fc;padding-left:4px;color:#111">谭江</span>
<span class="a t13" style="left:191px;top:0;width:54px;height:22px;border-right:1px solid #eaf1fc;padding-left:4px;color:#111">已审核</span>
</div>
</div>
<div class="a" style="left:72px;top:472px;width:245px;height:176px;background:#d3e3fb;overflow:hidden">
<div class="a btn" style="left:-17px;top:9px">型号查询<u>X</u></div>
<div class="a btn" style="left:65px;top:9px">编写流程<u>F</u></div>
<div class="a btn" style="left:147px;top:9px">修改信息<u>R</u></div>
<div class="a btn" style="left:229px;top:9px">保存流程</div>
<div class="a btn" style="left:-17px;top:38px">工具完成</div>
<div class="a btn" style="left:65px;top:38px">制作通知单</div>
<div class="a btn" style="left:147px;top:38px">指示审核<u>H</u></div>
<div class="a btn" style="left:229px;top:38px">修改审核</div>
<div class="a btn" style="left:-17px;top:67px">在线<span class="m65">WIP</span></div>
<div class="a btn" style="left:65px;top:67px">叠层验算</div>
<div class="a btn" style="left:147px;top:67px">回退审核<u>B</u></div>
<div class="a btn" style="left:229px;top:67px"></div>
<div class="a btn" style="left:-17px;top:96px">能力参数</div>
<div class="a btn d" style="left:65px;top:96px">调单导入</div>
<div class="a btn d" style="left:147px;top:96px">流程上网</div>
<div class="a btn" style="left:229px;top:96px">注销流程</div>
<div class="a btn" style="left:-17px;top:125px">取消修改<u>C</u></div>
<div class="a btn d" style="left:65px;top:125px">传送文件</div>
<div class="a btn d" style="left:147px;top:125px">接外调资料</div>
<div class="a btn" style="left:229px;top:125px">接收资料</div>
<div class="a" style="left:0;top:162px;width:245px;height:15px;background:repeating-conic-gradient(#fff 0 25%,#d4d0c8 0 50%) 0 0/2px 2px"></div>
<div class="a sbb" style="left:0;top:162px;height:15px"></div><div class="a sbb" style="left:229px;top:162px;height:15px"></div><div class="a sbb" style="left:32px;top:162px;width:158px;height:15px"></div>
<span class="a" style="left:4px;top:165px;width:0;height:0;border:4px solid transparent;border-right:5px solid #000;border-left:0"></span><span class="a" style="left:235px;top:165px;width:0;height:0;border:4px solid transparent;border-left:5px solid #000;border-right:0"></span>
</div>
<div class="a" style="left:319px;top:58px;width:560px;height:594px;background:#e4e0d4"></div>
<div class="a" style="left:322px;top:58px;width:560px;height:171px;background:#000"></div>
<div class="a" style="left:324px;top:60px;width:560px;height:168px;background:#dce9fb"></div>
<div class="a lab" style="left:330px;top:64px">生产型号</div>
<div class="a inp" style="left:391px;top:64px;width:133px">2A0017S3A0</div>
<div class="a lab" style="left:530px;top:64px">E工号</div>
<div class="a inp" style="left:571px;top:64px;width:143px">744276</div>
<div class="a lab" style="left:330px;top:96px">板厚</div>
<div class="a inp" style="left:363px;top:96px;width:61px">3.00</div>
<div class="a lab" style="left:430px;top:96px">板材</div>
<div class="a inp" style="left:463px;top:96px;width:61px">IT-180A</div>
<div class="a lab" style="left:530px;top:96px">验收标准</div>
<div class="a inp" style="left:591px;top:96px;width:123px">IPC-6012 Ⅱ级</div>
<div class="a lab" style="left:330px;top:128px">成长</div>
<div class="a inp" style="left:363px;top:128px;width:61px">508</div>
<div class="a lab" style="left:430px;top:128px">成宽</div>
<div class="a inp" style="left:463px;top:128px;width:61px">195.99</div>
<div class="a lab" style="left:530px;top:128px">PNL规格</div>
<div class="a inp" style="left:590px;top:128px;width:124px">1P=2U</div>
<div class="a lab" style="left:330px;top:160px">字符</div>
<div class="a inp" style="left:363px;top:160px;width:61px">白色字符</div>
<div class="a lab" style="left:430px;top:160px">阻焊</div>
<div class="a inp" style="left:463px;top:160px;width:61px">绿色</div>
<div class="a lab" style="left:530px;top:160px">终端客户代码</div>
<div class="a inp" style="left:620px;top:160px;width:94px"></div>
<div class="a" style="left:322px;top:232px;width:431px;height:219px;background:#000"></div>
<div class="a" style="left:324px;top:233.5px;width:428px;height:216.500px;background:#e9e5d9"></div>
<div class="a" style="left:326px;top:235px;width:426px;height:214px;background:#dde9fb;border:1px solid #6d6d6d;border-right:0;overflow:hidden" id="ppan">
<div class="a t13" style="left:0px;top:0px;width:410px;height:23px;background:#e6eefb;text-align:center;border-bottom:1px solid #c9d3e2">字符：工序基本参数</div>
<div class="a t13" style="left:0px;top:23px;width:25px;height:22px;background:linear-gradient(#f3f6fb,#e2e8f1);border-right:1px solid #c5cddb;border-bottom:1px solid #b9c3d3;padding-left:5px;"><span class="m65">NO</span></div>
<div class="a t13" style="left:25px;top:23px;width:140px;height:22px;background:linear-gradient(#f3f6fb,#e2e8f1);border-right:1px solid #c5cddb;border-bottom:1px solid #b9c3d3;padding-left:5px;">项目</div>
<div class="a t13" style="left:165px;top:23px;width:150px;height:22px;background:linear-gradient(#f3f6fb,#e2e8f1);border-right:1px solid #c5cddb;border-bottom:1px solid #b9c3d3;padding-left:5px;">参数</div>
<div class="a t13" style="left:0px;top:45px;width:25px;height:23px;border-right:1px solid #eaf1fc;border-bottom:1px solid #eaf1fc;padding-left:4px;overflow:hidden;letter-spacing:.2px"><span class="m7">1</span></div>
<div class="a t13" style="left:25px;top:45px;width:140px;height:23px;border-right:1px solid #eaf1fc;border-bottom:1px solid #eaf1fc;padding-left:4px;overflow:hidden;letter-spacing:.2px"><span class="m7">CS</span>面菲林号</div>
<div class="a t13" style="left:165px;top:45px;width:150px;height:23px;border-right:1px solid #eaf1fc;border-bottom:1px solid #eaf1fc;padding-left:4px;overflow:hidden;letter-spacing:.2px"><span class="m7">2a0017s3a0.to</span></div>
<div class="a t13" style="left:0px;top:68px;width:25px;height:23px;border-right:1px solid #eaf1fc;border-bottom:1px solid #eaf1fc;padding-left:4px;overflow:hidden;letter-spacing:.2px"><span class="m7">2</span></div>
<div class="a t13" style="left:25px;top:68px;width:140px;height:23px;border-right:1px solid #eaf1fc;border-bottom:1px solid #eaf1fc;padding-left:4px;overflow:hidden;letter-spacing:.2px"><span class="m7">SS</span>面菲林号</div>
<div class="a t13" style="left:165px;top:68px;width:150px;height:23px;border-right:1px solid #eaf1fc;border-bottom:1px solid #eaf1fc;padding-left:4px;overflow:hidden;letter-spacing:.2px"><span class="m7">2a0017s3a0.bo</span></div>
<div class="a t13" style="left:0px;top:91px;width:25px;height:23px;border-right:1px solid #eaf1fc;border-bottom:1px solid #eaf1fc;padding-left:4px;overflow:hidden;letter-spacing:.2px"><span class="m7">12</span></div>
<div class="a t13" style="left:25px;top:91px;width:140px;height:23px;border-right:1px solid #eaf1fc;border-bottom:1px solid #eaf1fc;padding-left:4px;overflow:hidden;letter-spacing:.2px">只加<span class="m7">UL</span>和周期</div>
<div class="a t13" style="left:165px;top:91px;width:150px;height:23px;border-right:1px solid #eaf1fc;border-bottom:1px solid #eaf1fc;padding-left:4px;overflow:hidden;letter-spacing:.2px"><span class="m7">/</span></div>
<div class="a t13" style="left:0px;top:114px;width:25px;height:23px;border-right:1px solid #eaf1fc;border-bottom:1px solid #eaf1fc;padding-left:4px;overflow:hidden;letter-spacing:.2px"><span class="m7">13</span></div>
<div class="a t13" style="left:25px;top:114px;width:140px;height:23px;border-right:1px solid #eaf1fc;border-bottom:1px solid #eaf1fc;padding-left:4px;overflow:hidden;letter-spacing:.2px">快捷标记<span class="m7">(FP+UL+D...</span></div>
<div class="a t13" style="left:165px;top:114px;width:150px;height:23px;border-right:1px solid #eaf1fc;border-bottom:1px solid #eaf1fc;padding-left:4px;overflow:hidden;letter-spacing:.2px"><span class="m7">FP+UL+DATECODE</span></div>
<div class="a t13" style="left:0px;top:137px;width:25px;height:23px;border-right:1px solid #eaf1fc;border-bottom:1px solid #eaf1fc;padding-left:4px;overflow:hidden;letter-spacing:.2px"><span class="m7">14</span></div>
<div class="a t13" style="left:25px;top:137px;width:140px;height:23px;border-right:1px solid #eaf1fc;border-bottom:1px solid #eaf1fc;padding-left:4px;overflow:hidden;letter-spacing:.2px">生产周期<span class="m7">(YYWW/WWYY)</span></div>
<div class="a t13" style="left:165px;top:137px;width:150px;height:23px;border-right:1px solid #eaf1fc;border-bottom:1px solid #eaf1fc;padding-left:4px;overflow:hidden;letter-spacing:.2px"><span class="m7">YYWW</span></div>
<div class="a t13" style="left:0px;top:160px;width:25px;height:23px;border-right:1px solid #eaf1fc;border-bottom:1px solid #eaf1fc;padding-left:4px;overflow:hidden;letter-spacing:.2px"><span class="m7">15</span></div>
<div class="a t13" style="left:25px;top:160px;width:140px;height:23px;border-right:1px solid #eaf1fc;border-bottom:1px solid #eaf1fc;padding-left:4px;overflow:hidden;letter-spacing:.2px">油墨颜色</div>
<div class="a t13" style="left:165px;top:160px;width:150px;height:23px;border-right:1px solid #eaf1fc;border-bottom:1px solid #eaf1fc;padding-left:4px;overflow:hidden;letter-spacing:.2px">白色字符</div>
<div class="a t13" style="left:0px;top:183px;width:25px;height:23px;border-right:1px solid #eaf1fc;border-bottom:1px solid #eaf1fc;padding-left:4px;overflow:hidden;letter-spacing:.2px"><span class="m7">16</span></div>
<div class="a t13" style="left:25px;top:183px;width:140px;height:23px;border-right:1px solid #eaf1fc;border-bottom:1px solid #eaf1fc;padding-left:4px;overflow:hidden;letter-spacing:.2px">最小字符线宽（<span class="m7">mil</span>）</div>
<div class="a t13" style="left:165px;top:183px;width:150px;height:23px;border-right:1px solid #eaf1fc;border-bottom:1px solid #eaf1fc;padding-left:4px;overflow:hidden;letter-spacing:.2px"><span class="m7">5</span></div>
<div class="a t13" style="left:0px;top:206px;width:25px;height:23px;border-right:1px solid #eaf1fc;border-bottom:1px solid #eaf1fc;padding-left:4px;overflow:hidden;letter-spacing:.2px"><span class="m7">17</span></div>
<div class="a t13" style="left:25px;top:206px;width:140px;height:23px;border-right:1px solid #eaf1fc;border-bottom:1px solid #eaf1fc;padding-left:4px;overflow:hidden;letter-spacing:.2px">最小字符高度（<span class="m7">mil</span>）</div>
<div class="a t13" style="left:165px;top:206px;width:150px;height:23px;border-right:1px solid #eaf1fc;border-bottom:1px solid #eaf1fc;padding-left:4px;overflow:hidden;letter-spacing:.2px"><span class="m7">30</span></div>
<div class="a" style="left:410px;top:0px;width:15px;height:213px;background:#7d9ccf"></div>
<div class="a" style="left:410px;top:0px;width:15px;height:17px;background:#9db8e4"></div><div class="a" style="left:410px;top:194px;width:15px;height:17px;background:#9db8e4"></div>
<span class="a" style="left:413.5px;top:5px;width:0;height:0;border:4px solid transparent;border-bottom:5px solid #4d6185;border-top:0"></span><span class="a" style="left:413.5px;top:201px;width:0;height:0;border:4px solid transparent;border-top:5px solid #4d6185;border-bottom:0"></span>
<div class="a" style="left:410px;top:18px;width:15px;height:90px;background:linear-gradient(90deg,#f1f4f9,#d4dbe6);border:1px solid #8fa3c4;border-radius:2px"></div>
<div class="a" style="left:414px;top:59px;width:7px;height:7px;background:repeating-linear-gradient(#8896ad 0 1px,transparent 1px 2px)"></div>
</div>
<div class="a" style="left:464px;top:363px;width:118px;height:48px;border:3px solid #33d833;box-shadow:0 0 4px 1px rgba(40,200,40,.5), 2px 3px 4px rgba(0,0,0,.25)"></div>
<div class="a" style="left:322px;top:456px;width:431px;height:194px;background:#000"></div>
<div class="a" style="left:324px;top:457.5px;width:428px;height:191.500px;background:#d7e6fc"></div>
<div class="a lab" style="left:330px;top:483px;font-size:14.500px">工</div>
<div class="a lab" style="left:330px;top:503px;font-size:14.500px">艺</div>
<div class="a lab" style="left:330px;top:523px;font-size:14.500px">备</div>
<div class="a lab" style="left:330px;top:543px;font-size:14.500px">注</div>
<div class="a lab" style="left:500px;top:483px;font-size:14.500px">型</div>
<div class="a lab" style="left:500px;top:503px;font-size:14.500px">号</div>
<div class="a lab" style="left:500px;top:523px;font-size:14.500px">备</div>
<div class="a lab" style="left:500px;top:543px;font-size:14.500px">注</div>
<div class="a inp" style="left:349px;top:460px;width:146px;height:149px;line-height:20.500px;padding-top:3px;padding-left:4px;font-size:14px;white-space:normal"></div>
<div class="a" style="left:477px;top:462px;width:16px;height:145px;background:repeating-conic-gradient(#fff 0 25%,#d4d0c8 0 50%) 0 0/2px 2px"></div>
<div class="a sbb" style="left:477px;top:462px"></div><div class="a sbb" style="left:477px;top:591px"></div>
<span class="a" style="left:481px;top:467px;width:0;height:0;border:4px solid transparent;border-bottom:4px solid #808080;border-top:0"></span><span class="a" style="left:481px;top:597px;width:0;height:0;border:4px solid transparent;border-top:4px solid #808080;border-bottom:0"></span>
<div class="a inp" style="left:519px;top:460px;width:146px;height:149px;line-height:20.500px;padding-top:3px;padding-left:4px;font-size:14px;white-space:normal">我司生产型号加在<br>顶层字符</div>
<div class="a" style="left:647px;top:462px;width:16px;height:145px;background:repeating-conic-gradient(#fff 0 25%,#d4d0c8 0 50%) 0 0/2px 2px"></div>
<div class="a sbb" style="left:647px;top:462px"></div><div class="a sbb" style="left:647px;top:591px"></div>
<span class="a" style="left:651px;top:467px;width:0;height:0;border:4px solid transparent;border-bottom:4px solid #808080;border-top:0"></span><span class="a" style="left:651px;top:597px;width:0;height:0;border:4px solid transparent;border-top:4px solid #808080;border-bottom:0"></span>
<div class="a" style="left:756px;top:232px;width:120px;height:418px;background:#000"></div>
<div class="a" style="left:757.5px;top:233.5px;width:120px;height:415.500px;background:#d7e6fc"></div>
<div class="a" style="left:759px;top:235px;width:110px;height:90px;background:#dfe5f1;border:1px solid #000"></div>
<div class="a t13" style="left:761px;top:260px;width:100px;height:22px;background:linear-gradient(#fde2b0,#f9c878 45%,#f5ae48);padding-left:5px">油墨型号</div>
<div class="a" style="left:761px;top:282px;width:100px;height:23px;background:linear-gradient(#fcdca0,#f9be60 50%,#f7b048 55%,#fbd490)"></div>
<div class="a" style="left:761px;top:309px;width:100px;height:16px;background:#7d9ccf"></div><div class="a" style="left:761px;top:309px;width:16px;height:16px;background:#9db8e4"></div><span class="a" style="left:765px;top:313px;width:0;height:0;border:4px solid transparent;border-right:5px solid #4d6185;border-left:0"></span><div class="a" style="left:778px;top:309px;width:90px;height:16px;background:linear-gradient(#f1f4f9,#d4dbe6);border:1px solid #8fa3c4"></div>
<div class="a" style="left:0px;top:651px;width:870px;height:31px;background:linear-gradient(#d9e7fb,#c3d8f6 70%,#b4ccf0)"></div>
<div class="a nw" style="left:11px;top:656px;font-size:13.500px;line-height:20px;color:#1c1cd4">P3</div><span class="a" style="left:44px;top:665px;width:0;height:0;border:3px solid transparent;border-top:3px solid #222;border-bottom:0"></span>
<div class="a nw" style="left:56px;top:653px;width:54px;height:22px;border:1px solid #a9c1e6;border-color:#a9c1e6 #eef4fd #eef4fd #a9c1e6;background:#d6e5fb;font-size:13.500px;line-height:22px;color:#1c1cd4;text-align:center">广域网</div>
<div class="a nw" style="left:112px;top:653px;width:44px;height:22px;border:1px solid #a9c1e6;border-color:#a9c1e6 #eef4fd #eef4fd #a9c1e6;background:#d6e5fb;font-size:13.500px;line-height:22px;color:#1c1cd4;text-align:center">CAM</div>
<div class="a nw" style="left:158px;top:653px;width:53px;height:22px;border:1px solid #a9c1e6;border-color:#a9c1e6 #eef4fd #eef4fd #a9c1e6;background:#d6e5fb;font-size:13.500px;line-height:22px;color:#1c1cd4;text-align:center">汪朝文</div>
<div class="a" style="left:213px;top:653px;width:660px;height:22px;border:1px solid #a9c1e6;border-color:#a9c1e6 #eef4fd #eef4fd #a9c1e6;background:#d3e3fa"></div>
</div></body></html>
